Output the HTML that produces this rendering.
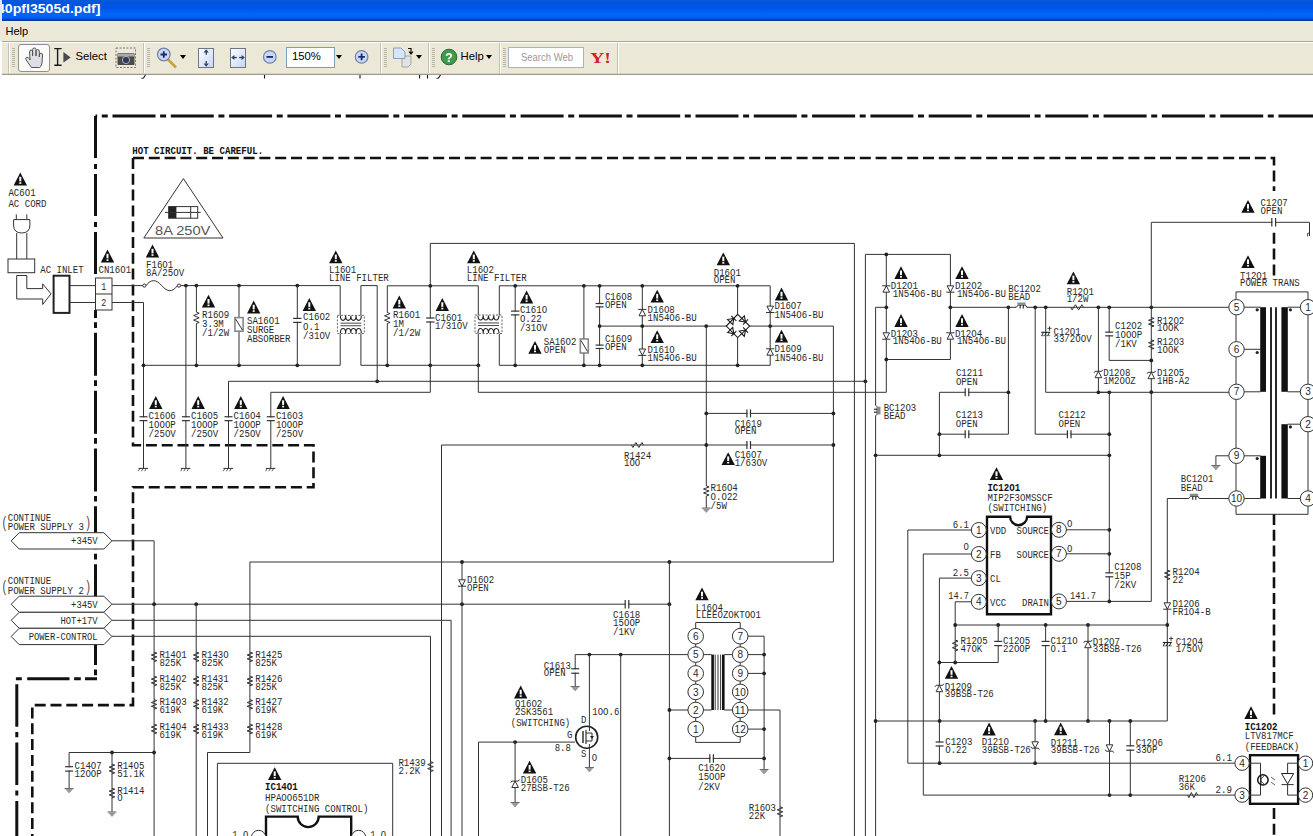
<!DOCTYPE html>
<html><head><meta charset="utf-8">
<style>
html,body{margin:0;padding:0;width:1313px;height:836px;overflow:hidden;background:#fff;font-family:"Liberation Sans",sans-serif;}
#title{position:absolute;left:0;top:0;width:1313px;height:21px;background:linear-gradient(#0a5ad8 0%,#0054e0 15%,#0055e8 38%,#0066f8 65%,#0062f4 82%,#0550d8 90%,#083a9c 97%,#083a9c 100%);}
#title span{position:absolute;left:-4px;top:1px;color:#fff;font-weight:bold;font-size:14px;letter-spacing:0.6px;}
#menu{position:absolute;left:0;top:21px;width:1313px;height:20px;background:linear-gradient(#dff2fc 0 1px,#e6ecdc 1px 2px,#ece9d8 2px);}
#menu span{position:absolute;left:5.5px;top:4px;font-size:11px;color:#000;}
#tb{position:absolute;left:2px;top:41px;width:1311px;height:32px;background:#ebe8d7;border-top:1px solid #aca899;box-shadow:inset 0 1px 0 #fff;}
#tbline{position:absolute;left:2px;top:73px;width:1311px;height:2px;background:linear-gradient(#d6d3c2 0 1px,#9d9b8a 1px 2px);}
.sep{position:absolute;top:43px;width:1px;height:30px;background:#c5c2b2;border-right:1px solid #fff;}
.grip{position:absolute;top:48px;width:3px;height:19px;background:repeating-linear-gradient(#b9b6a4 0 1px,transparent 1px 2px);}
.tbt{position:absolute;font-size:11.3px;color:#000;}
.dd{position:absolute;top:55px;width:0;height:0;border-left:3.5px solid transparent;border-right:3.5px solid transparent;border-top:4px solid #000;}
svg{position:absolute;left:0;top:0;}
</style></head><body>
<div id="title"></div><div style="position:absolute;left:0;top:0;width:2px;height:21px;background:#dfe6f2"></div>
<svg width="200" height="21" style="position:absolute;left:0;top:0"><text x="-3" y="12.9" font-size="13.6" font-weight="bold" font-family="Liberation Sans" fill="#fff" textLength="103.5" lengthAdjust="spacingAndGlyphs">40pfl3505d.pdf]</text><rect x="0" y="0" width="2" height="21" fill="#dfe6f2"/></svg>
<div id="menu"><span>Help</span></div>
<div id="tb"></div>
<div id="tbline"></div>
<div class="sep" style="left:8px"></div>
<div class="grip" style="left:12px"></div>
<div style="position:absolute;left:18px;top:44px;width:30px;height:26px;background:#fbfbf9;border:1px solid #8f8f8f;border-radius:3px;"></div>
<svg width="1313" height="836" viewBox="0 0 1313 836" style="position:absolute;left:0;top:0">
<!-- hand -->
<path d="M31.5,67.5 L26,59.8 Q25,57.8 26.6,57.2 Q28,57 29.6,59 L30,60 L29.6,52 Q29.6,50 31.1,50 Q32.6,50 32.6,52 L32.6,56 L32.6,49.6 Q32.6,48 34.3,48 Q36,48 36,49.6 L36,56 L36,51.2 Q36,49.6 37.6,49.6 Q39.3,49.6 39.3,51.2 L39.3,57 L39.4,54.8 Q39.4,53.2 41,53.2 Q42.5,53.2 42.5,55 L42,63 Q41,67.5 39.5,67.5 Z" fill="#dedee6" stroke="#555" stroke-width="1"/>
<!-- I-beam -->
<path d="M54.3,48.6 H61.6 M57.6,48.6 V65.2 M54.3,65.2 H61.6" stroke="#1a1a1a" stroke-width="1.4" fill="none"/>
<path d="M63.4,52 L70.7,57.5 L63.4,62.5 Z" fill="#4a4a4a"/>
<!-- camera -->
<rect x="116" y="48" width="19.5" height="19.5" fill="none" stroke="#777" stroke-width="1" stroke-dasharray="2 1.5"/>
<rect x="117.5" y="53" width="17" height="12" rx="1" fill="#4a4a4a"/>
<rect x="118" y="53.5" width="16" height="3" fill="#aaa"/>
<circle cx="126" cy="60" r="3.6" fill="#2a3a5a" stroke="#ccc" stroke-width="0.8"/>
<!-- zoom in magnifier -->
<line x1="167.5" y1="59" x2="176" y2="67.5" stroke="#c9a23a" stroke-width="2.6"/>
<circle cx="163.8" cy="54.5" r="6.3" fill="#c8d8f4" stroke="#7480a8" stroke-width="1.2"/>
<path d="M160.5,54.5 H167 M163.8,51.2 V57.8" stroke="#1a2a6a" stroke-width="1.8"/>
<!-- fit page -->
<defs><linearGradient id="gb" x1="0" y1="0" x2="1" y2="1"><stop offset="0" stop-color="#ffffff"/><stop offset="1" stop-color="#c4d4f0"/></linearGradient></defs>
<rect x="198.5" y="48.5" width="15" height="19" fill="url(#gb)" stroke="#6f7686" stroke-width="1"/>
<path d="M206.2,49.2 L203.6,52.6 H208.8 Z M203.6,63.4 H208.8 L206.2,66.8 Z" fill="#2a4268"/>
<rect x="205.6" y="52" width="1.3" height="2.8" fill="#2a4268"/><rect x="205.6" y="61" width="1.3" height="2.6" fill="#2a4268"/>
<!-- fit width -->
<rect x="230.5" y="48.5" width="15" height="19" fill="url(#gb)" stroke="#6f7686" stroke-width="1"/>
<path d="M231.2,57.5 L234.4,54.9 V60.1 Z M244.8,57.5 L241.6,54.9 V60.1 Z" fill="#2a4268"/>
<rect x="234" y="56.9" width="2.8" height="1.3" fill="#2a4268"/><rect x="239.2" y="56.9" width="2.8" height="1.3" fill="#2a4268"/>
<!-- zoom out -->
<circle cx="269.8" cy="56.9" r="6.3" fill="#c8d8f4" stroke="#7480a8" stroke-width="1.2"/>
<path d="M266.5,56.9 H273" stroke="#1a2a6a" stroke-width="1.8"/>
<!-- zoom box -->
<rect x="286.5" y="47.5" width="48" height="20" fill="#fff" stroke="#7f9db9" stroke-width="1"/>
<!-- zoom in 2 -->
<circle cx="361.6" cy="56.9" r="6.3" fill="#c8d8f4" stroke="#7480a8" stroke-width="1.2"/>
<path d="M358.3,56.9 H364.9 M361.6,53.6 V60.2" stroke="#1a2a6a" stroke-width="1.8"/>
<!-- pages icon -->
<path d="M402,56 H411 V64 L408,67 H402 Z" fill="#e2e2e2" stroke="#999" stroke-width="0.8"/>
<path d="M393.5,48 H401 L405,52 V58.5 H393.5 Z" fill="#d8e6fa" stroke="#7a8cb0" stroke-width="0.8"/>
<path d="M408,48.5 H411 V53 M409,51.5 L411,54 L413,51.5" stroke="#111" stroke-width="1.2" fill="none"/>
<!-- help -->
<circle cx="449" cy="57" r="7.8" fill="#3f9a4a" stroke="#2a6a32" stroke-width="1"/>
<text x="449" y="61.5" font-size="12" font-weight="bold" font-family="Liberation Sans" fill="#fff" text-anchor="middle">?</text>
<!-- search -->
<rect x="508.5" y="47.5" width="75" height="20" fill="#fff" stroke="#a6b4c6" stroke-width="1"/>
<text x="521" y="61" font-size="10.5" font-family="Liberation Sans" fill="#9a9a9a" textLength="52" lengthAdjust="spacingAndGlyphs">Search Web</text>
<text x="590" y="63" font-size="15" font-weight="bold" font-family="Liberation Serif" fill="#d0202a" textLength="21" lengthAdjust="spacingAndGlyphs">Y!</text>
</svg>
<div class="tbt" style="left:75.5px;top:50px;">Select</div>
<svg width="1313" height="90" style="position:absolute;left:0;top:0">
<path d="M145.5,75 L143.5,78 L141.5,78.3 M264.5,75 V78.5 M360,75 V78.5 M419.6,75 V78.5 M427.5,75 V78.5 M440.5,75 L438.5,78 L436.5,78.3" stroke="#111" stroke-width="1.1" fill="none"/>
</svg>
<div class="sep" style="left:143px"></div>
<div class="grip" style="left:147px"></div>
<div class="dd" style="left:180px"></div>
<div class="tbt" style="left:292px;top:50px;">150%</div>
<div class="dd" style="left:336px"></div>
<div class="sep" style="left:379.5px"></div>
<div class="grip" style="left:383.5px"></div>
<div class="dd" style="left:416px"></div>
<div class="sep" style="left:427.5px"></div>
<div class="grip" style="left:432px"></div>
<div class="tbt" style="left:460.5px;top:50px;">Help</div>
<div class="dd" style="left:486px"></div>
<div class="sep" style="left:498.5px"></div>
<div class="grip" style="left:503px"></div>
<div class="sep" style="left:617px"></div>
<svg width="1313" height="836" viewBox="0 0 1313 836" style="position:absolute;left:0;top:0" shape-rendering="auto">
<path d="M95.5,116 H1313" stroke="#111" stroke-width="3" fill="none" stroke-dasharray="43 4.6 6 4.7" stroke-dashoffset="41.3"/>
<path d="M95.5,116 V278" stroke="#111" stroke-width="3" fill="none" stroke-dasharray="42 6 5 5"/>
<path d="M95.5,310 V678.8" stroke="#111" stroke-width="3" fill="none" stroke-dasharray="43 4.4 5.7 4.75" stroke-dashoffset="35.05"/>
<path d="M97,678.8 H15.9" stroke="#111" stroke-width="3" fill="none" stroke-dasharray="12 4.2 6.7 4.6 42.3 5.4 5.9 100"/>
<path d="M16.8,684.3 V836" stroke="#111" stroke-width="3" fill="none" stroke-dasharray="42.5 5.3 5.2 5.3"/>
<path d="M133,158 H1274 V191" stroke="#111" stroke-width="2.6" fill="none" stroke-dasharray="11 4.8"/>
<path d="M1274,232.8 V276.3" stroke="#111" stroke-width="2.6" fill="none" stroke-dasharray="11 4.8"/>
<path d="M1274,514 V716" stroke="#111" stroke-width="2.6" fill="none" stroke-dasharray="11 4.8"/>
<path d="M1274,808 V836" stroke="#111" stroke-width="2.6" fill="none" stroke-dasharray="11 4.8"/>
<path d="M133,158 V445.3 H313.5 V487.3 H133 V705.1 H32.3 V836" stroke="#111" stroke-width="2.6" fill="none" stroke-dasharray="11 4.8"/>
<text x="132.3" y="154.3" font-size="11.6" font-family="Liberation Mono" fill="#111" text-anchor="start" font-weight="bold" textLength="130.8" lengthAdjust="spacingAndGlyphs">HOT CIRCUIT. BE CAREFUL.</text>
<path d="M183.4,178.6 L223,238 L143.8,238 Z" stroke="#333" stroke-width="1" fill="none" />
<rect x="168.7" y="206.6" width="29" height="11.6" fill="none" stroke="#333" stroke-width="1"/>
<rect x="168.7" y="206.6" width="7.7" height="11.6" fill="#222"/>
<path d="M190.7,206.6 L190.7,218.2" stroke="#333" stroke-width="1" fill="none" />
<path d="M165,212.4 L200.7,212.4" stroke="#333" stroke-width="1" fill="none" />
<text x="155" y="234.7" font-size="13" font-family="Liberation Sans" fill="#555" text-anchor="start" textLength="55.3" lengthAdjust="spacingAndGlyphs">8A 250V</text>
<path d="M20.3,172.6 L27.0,185.4 L13.600000000000001,185.4 Z" fill="#111"/>
<rect x="19.3" y="176.8" width="2" height="4.6" fill="#fff"/>
<rect x="19.3" y="182.3" width="2" height="1.6" fill="#fff"/>
<text x="8.4" y="196.2" font-size="10" font-family="Liberation Mono" fill="#2a2a2a" text-anchor="start" textLength="27.2" lengthAdjust="spacingAndGlyphs">AC6O1</text>
<text x="8.4" y="207.0" font-size="10" font-family="Liberation Mono" fill="#2a2a2a" text-anchor="start" textLength="38.1" lengthAdjust="spacingAndGlyphs">AC CORD</text>
<path d="M16.3,214.4 L16.3,219.6" stroke="#333" stroke-width="1" fill="none" />
<path d="M26.8,214.4 L26.8,219.6" stroke="#333" stroke-width="1" fill="none" />
<path d="M13.6,219.6 H29.9 V225 Q29.9,233 21.7,233 Q13.6,233 13.6,225 Z" stroke="#333" stroke-width="1" fill="none" />
<path d="M16.7,233 L16.7,259" stroke="#333" stroke-width="1" fill="none" />
<path d="M26.8,233 L26.8,259" stroke="#333" stroke-width="1" fill="none" />
<rect x="8" y="259" width="26.7" height="13.7" fill="none" stroke="#333" stroke-width="1"/>
<path d="M16.7,275.5 V299 H42.7 V304.5 L51,293.8 L42.7,283.9 V288.6 H26.8 V275.5 Z" stroke="#333" stroke-width="1" fill="none" />
<text x="40.2" y="272.7" font-size="10" font-family="Liberation Mono" fill="#2a2a2a" text-anchor="start" textLength="43.5" lengthAdjust="spacingAndGlyphs">AC INLET</text>
<rect x="53.6" y="275.7" width="15.9" height="37.2" fill="none" stroke="#222" stroke-width="2"/>
<path d="M69.5,285.6 L95.5,285.6" stroke="#333" stroke-width="1" fill="none" />
<path d="M69.5,302.5 L95.5,302.5" stroke="#333" stroke-width="1" fill="none" />
<rect x="95.5" y="278" width="16.5" height="32" fill="#fff" stroke="#333" stroke-width="1"/>
<path d="M95.5,294 L112,294" stroke="#333" stroke-width="1" fill="none" />
<text x="103.7" y="289.5" font-size="10" font-family="Liberation Mono" fill="#2a2a2a" text-anchor="middle" textLength="5.0" lengthAdjust="spacingAndGlyphs">1</text>
<text x="103.7" y="306" font-size="10" font-family="Liberation Mono" fill="#2a2a2a" text-anchor="middle" textLength="5.0" lengthAdjust="spacingAndGlyphs">2</text>
<path d="M107.5,249.6 L114.2,262.4 L100.8,262.4 Z" fill="#111"/>
<rect x="106.5" y="253.8" width="2" height="4.6" fill="#fff"/>
<rect x="106.5" y="259.3" width="2" height="1.6" fill="#fff"/>
<text x="98.5" y="273" font-size="10" font-family="Liberation Mono" fill="#2a2a2a" text-anchor="start" textLength="32.6" lengthAdjust="spacingAndGlyphs">CN16O1</text>
<path d="M152.5,244.6 L159.2,257.4 L145.8,257.4 Z" fill="#111"/>
<rect x="151.5" y="248.8" width="2" height="4.6" fill="#fff"/>
<rect x="151.5" y="254.3" width="2" height="1.6" fill="#fff"/>
<text x="146.0" y="267.6" font-size="10" font-family="Liberation Mono" fill="#2a2a2a" text-anchor="start" textLength="27.2" lengthAdjust="spacingAndGlyphs">F16O1</text>
<text x="146.0" y="275.5" font-size="10" font-family="Liberation Mono" fill="#2a2a2a" text-anchor="start" textLength="38.1" lengthAdjust="spacingAndGlyphs">8A/25OV</text>
<path d="M112,285.6 L142.9,285.6" stroke="#333" stroke-width="1" fill="none" />
<circle cx="144.4" cy="285.6" r="1.6" fill="#fff" stroke="#333" stroke-width="1"/>
<circle cx="179" cy="285.6" r="1.6" fill="#fff" stroke="#333" stroke-width="1"/>
<path d="M146,285.6 C151,279 156,279 161.7,285.6 S172.5,292.5 177.4,285.6" stroke="#333" stroke-width="1" fill="none" />
<path d="M180.6,285.6 L340.2,285.6" stroke="#333" stroke-width="1" fill="none" />
<path d="M112,302.5 L143.5,302.5 L143.5,468.4" stroke="#333" stroke-width="1" fill="none" />
<path d="M143.5,365.3 L340.2,365.3" stroke="#333" stroke-width="1" fill="none" />
<circle cx="143.5" cy="365.3" r="1.9" fill="#222"/>
<circle cx="185.9" cy="285.6" r="1.9" fill="#222"/>
<circle cx="196.4" cy="285.6" r="1.9" fill="#222"/>
<circle cx="196.4" cy="365.3" r="1.9" fill="#222"/>
<circle cx="239" cy="285.6" r="1.9" fill="#222"/>
<circle cx="239" cy="365.3" r="1.9" fill="#222"/>
<circle cx="297.3" cy="285.6" r="1.9" fill="#222"/>
<circle cx="297.3" cy="365.3" r="1.9" fill="#222"/>
<path d="M185.9,285.6 L185.9,468.4" stroke="#333" stroke-width="1" fill="none" />
<path d="M196.4,285.6 L196.4,312.1" stroke="#333" stroke-width="1" fill="none" />
<path d="M196.4,312.1 L199.20000000000002,313.24 L193.6,315.52000000000004 L199.20000000000002,317.8 L193.6,320.08000000000004 L199.20000000000002,322.36 L196.4,323.5" stroke="#333" stroke-width="1" fill="none" />
<path d="M196.4,323.5 L196.4,365.3" stroke="#333" stroke-width="1" fill="none" />
<path d="M208.5,294.8 L215.2,307.59999999999997 L201.8,307.59999999999997 Z" fill="#111"/>
<rect x="207.5" y="299.0" width="2" height="4.6" fill="#fff"/>
<rect x="207.5" y="304.5" width="2" height="1.6" fill="#fff"/>
<text x="202.0" y="317.8" font-size="10" font-family="Liberation Mono" fill="#2a2a2a" text-anchor="start" textLength="27.2" lengthAdjust="spacingAndGlyphs">R16O9</text>
<text x="202.0" y="327.1" font-size="10" font-family="Liberation Mono" fill="#2a2a2a" text-anchor="start" textLength="21.8" lengthAdjust="spacingAndGlyphs">3.3M</text>
<text x="202.0" y="336.40000000000003" font-size="10" font-family="Liberation Mono" fill="#2a2a2a" text-anchor="start" textLength="27.2" lengthAdjust="spacingAndGlyphs">/1/2W</text>
<path d="M239,285.6 L239,365.3" stroke="#333" stroke-width="1" fill="none" />
<rect x="234.9" y="317.6" width="8.2" height="13.6" fill="#fff" stroke="#888" stroke-width="1.6"/>
<path d="M235.5,319 L242.5,330" stroke="#333" stroke-width="1" fill="none" />
<path d="M253.7,300.6 L260.4,313.4 L247.0,313.4 Z" fill="#111"/>
<rect x="252.7" y="304.8" width="2" height="4.6" fill="#fff"/>
<rect x="252.7" y="310.3" width="2" height="1.6" fill="#fff"/>
<text x="247.0" y="323.8" font-size="10" font-family="Liberation Mono" fill="#2a2a2a" text-anchor="start" textLength="32.6" lengthAdjust="spacingAndGlyphs">SA16O1</text>
<text x="247.0" y="333.0" font-size="10" font-family="Liberation Mono" fill="#2a2a2a" text-anchor="start" textLength="27.2" lengthAdjust="spacingAndGlyphs">SURGE</text>
<text x="247.0" y="342.2" font-size="10" font-family="Liberation Mono" fill="#2a2a2a" text-anchor="start" textLength="43.5" lengthAdjust="spacingAndGlyphs">ABSORBER</text>
<path d="M297.3,285.6 L297.3,365.3" stroke="#333" stroke-width="1" fill="none" />
<rect x="296.3" y="319.0" width="2" height="2.8" fill="#fff"/>
<path d="M293.1,318.4 L301.5,318.4" stroke="#333" stroke-width="1.2" fill="none" />
<path d="M293.1,322.4 L301.5,322.4" stroke="#333" stroke-width="1.2" fill="none" />
<path d="M309.3,298.1 L316.0,310.9 L302.6,310.9 Z" fill="#111"/>
<rect x="308.3" y="302.3" width="2" height="4.6" fill="#fff"/>
<rect x="308.3" y="307.8" width="2" height="1.6" fill="#fff"/>
<text x="303.1" y="320.4" font-size="10" font-family="Liberation Mono" fill="#2a2a2a" text-anchor="start" textLength="27.2" lengthAdjust="spacingAndGlyphs">C16O2</text>
<text x="303.1" y="329.79999999999995" font-size="10" font-family="Liberation Mono" fill="#2a2a2a" text-anchor="start" textLength="16.3" lengthAdjust="spacingAndGlyphs">O.1</text>
<text x="303.1" y="339.2" font-size="10" font-family="Liberation Mono" fill="#2a2a2a" text-anchor="start" textLength="27.2" lengthAdjust="spacingAndGlyphs">/31OV</text>
<path d="M340.2,285.6 L340.2,365.3" stroke="#333" stroke-width="1" fill="none" />
<path d="M360.9,285.6 L360.9,365.3" stroke="#333" stroke-width="1" fill="none" />
<path d="M360.9,285.6 L377.2,285.6" stroke="#333" stroke-width="1" fill="none" />
<path d="M377.2,285.6 L377.2,381.3" stroke="#333" stroke-width="1" fill="none" />
<circle cx="377.2" cy="381.3" r="1.9" fill="#222"/>
<path d="M360.9,365.3 L430.3,365.3" stroke="#333" stroke-width="1" fill="none" />
<path d="M335.8,250.4 L342.5,263.2 L329.1,263.2 Z" fill="#111"/>
<rect x="334.8" y="254.60000000000002" width="2" height="4.6" fill="#fff"/>
<rect x="334.8" y="260.1" width="2" height="1.6" fill="#fff"/>
<text x="329.0" y="272.7" font-size="10" font-family="Liberation Mono" fill="#2a2a2a" text-anchor="start" textLength="27.2" lengthAdjust="spacingAndGlyphs">L16O1</text>
<text x="329.0" y="280.7" font-size="10" font-family="Liberation Mono" fill="#2a2a2a" text-anchor="start" textLength="59.8" lengthAdjust="spacingAndGlyphs">LINE FILTER</text>
<rect x="337.4" y="315.4" width="26.900000000000034" height="18.100000000000023" fill="#fff" stroke="#555" stroke-width="0.9" stroke-dasharray="2 1.5"/>
<path d="M340.4,315.79999999999995 a2.6125000000000043,4.6 0 0 0 5.2250000000000085,0 a2.6125000000000043,4.6 0 0 0 5.2250000000000085,0 a2.6125000000000043,4.6 0 0 0 5.2250000000000085,0 a2.6125000000000043,4.6 0 0 0 5.2250000000000085,0" stroke="#222" stroke-width="1.1" fill="none" />
<path d="M340.4,333.1 a2.6125000000000043,4.6 0 0 1 5.2250000000000085,0 a2.6125000000000043,4.6 0 0 1 5.2250000000000085,0 a2.6125000000000043,4.6 0 0 1 5.2250000000000085,0 a2.6125000000000043,4.6 0 0 1 5.2250000000000085,0" stroke="#222" stroke-width="1.1" fill="none" />
<path d="M340.4,323.15 L361.3,323.15" stroke="#333" stroke-width="0.9" fill="none" />
<path d="M340.4,325.75 L361.3,325.75" stroke="#333" stroke-width="0.9" fill="none" />
<path d="M430.3,243.4 L854.4,243.4 L854.4,836" stroke="#333" stroke-width="1" fill="none" />
<path d="M430.3,243.4 L430.3,392.3 L270.8,392.3 L270.8,468.4" stroke="#333" stroke-width="1" fill="none" />
<path d="M228.5,468.4 L228.5,381.3 L865.4,381.3" stroke="#333" stroke-width="1" fill="none" />
<circle cx="865.4" cy="381.3" r="1.9" fill="#222"/>
<path d="M387.3,285.8 L478.3,285.8" stroke="#333" stroke-width="1" fill="none" />
<path d="M478.3,285.8 L478.3,392.3 L886.3,392.3 L886.3,254.4" stroke="#333" stroke-width="1" fill="none" />
<circle cx="430.3" cy="285.8" r="1.9" fill="#222"/>
<circle cx="430.3" cy="365.3" r="1.9" fill="#222"/>
<circle cx="478.3" cy="365.3" r="1.9" fill="#222"/>
<circle cx="387.3" cy="365.3" r="1.9" fill="#222"/>
<path d="M387.3,285.8 L387.3,312.5" stroke="#333" stroke-width="1" fill="none" />
<path d="M387.3,312.5 L390.1,313.6 L384.5,315.8 L390.1,318.0 L384.5,320.2 L390.1,322.4 L387.3,323.5" stroke="#333" stroke-width="1" fill="none" />
<path d="M387.3,323.5 L387.3,365.3" stroke="#333" stroke-width="1" fill="none" />
<path d="M399.3,295.6 L406.0,308.4 L392.6,308.4 Z" fill="#111"/>
<rect x="398.3" y="299.8" width="2" height="4.6" fill="#fff"/>
<rect x="398.3" y="305.3" width="2" height="1.6" fill="#fff"/>
<text x="393.0" y="318.0" font-size="10" font-family="Liberation Mono" fill="#2a2a2a" text-anchor="start" textLength="27.2" lengthAdjust="spacingAndGlyphs">R16O1</text>
<text x="393.0" y="326.8" font-size="10" font-family="Liberation Mono" fill="#2a2a2a" text-anchor="start" textLength="10.9" lengthAdjust="spacingAndGlyphs">1M</text>
<text x="393.0" y="335.6" font-size="10" font-family="Liberation Mono" fill="#2a2a2a" text-anchor="start" textLength="27.2" lengthAdjust="spacingAndGlyphs">/1/2W</text>
<rect x="429.3" y="318.6" width="2" height="2.8" fill="#fff"/>
<path d="M426.1,318.0 L434.5,318.0" stroke="#333" stroke-width="1.2" fill="none" />
<path d="M426.1,322.0 L434.5,322.0" stroke="#333" stroke-width="1.2" fill="none" />
<path d="M442.3,298.1 L449.0,310.9 L435.6,310.9 Z" fill="#111"/>
<rect x="441.3" y="302.3" width="2" height="4.6" fill="#fff"/>
<rect x="441.3" y="307.8" width="2" height="1.6" fill="#fff"/>
<text x="435.0" y="320.5" font-size="10" font-family="Liberation Mono" fill="#2a2a2a" text-anchor="start" textLength="27.2" lengthAdjust="spacingAndGlyphs">C16O1</text>
<text x="435.0" y="328.8" font-size="10" font-family="Liberation Mono" fill="#2a2a2a" text-anchor="start" textLength="32.6" lengthAdjust="spacingAndGlyphs">1/31OV</text>
<path d="M430.3,365.3 L478.3,365.3" stroke="#333" stroke-width="1" fill="none" />
<path d="M499.3,285.8 L770.2,285.8" stroke="#333" stroke-width="1" fill="none" />
<path d="M499.3,285.8 L499.3,365.3 L770.2,365.3" stroke="#333" stroke-width="1" fill="none" />
<rect x="475" y="315" width="27" height="18.5" fill="#fff" stroke="#555" stroke-width="0.9" stroke-dasharray="2 1.5"/>
<path d="M478,315.4 a2.625,4.6 0 0 0 5.25,0 a2.625,4.6 0 0 0 5.25,0 a2.625,4.6 0 0 0 5.25,0 a2.625,4.6 0 0 0 5.25,0" stroke="#222" stroke-width="1.1" fill="none" />
<path d="M478,333.1 a2.625,4.6 0 0 1 5.25,0 a2.625,4.6 0 0 1 5.25,0 a2.625,4.6 0 0 1 5.25,0 a2.625,4.6 0 0 1 5.25,0" stroke="#222" stroke-width="1.1" fill="none" />
<path d="M478,322.95 L499,322.95" stroke="#333" stroke-width="0.9" fill="none" />
<path d="M478,325.55 L499,325.55" stroke="#333" stroke-width="0.9" fill="none" />
<path d="M473.8,250.4 L480.5,263.2 L467.1,263.2 Z" fill="#111"/>
<rect x="472.8" y="254.60000000000002" width="2" height="4.6" fill="#fff"/>
<rect x="472.8" y="260.1" width="2" height="1.6" fill="#fff"/>
<text x="466.8" y="272.7" font-size="10" font-family="Liberation Mono" fill="#2a2a2a" text-anchor="start" textLength="27.2" lengthAdjust="spacingAndGlyphs">L16O2</text>
<text x="466.8" y="280.7" font-size="10" font-family="Liberation Mono" fill="#2a2a2a" text-anchor="start" textLength="59.8" lengthAdjust="spacingAndGlyphs">LINE FILTER</text>
<path d="M515.2,285.8 L515.2,365.3" stroke="#333" stroke-width="1" fill="none" />
<rect x="514.2" y="311.70000000000005" width="2" height="2.5999999999999996" fill="#fff"/>
<path d="M511.00000000000006,311.1 L519.4000000000001,311.1" stroke="#333" stroke-width="1.2" fill="none" />
<path d="M511.00000000000006,314.9 L519.4000000000001,314.9" stroke="#333" stroke-width="1.2" fill="none" />
<circle cx="515.2" cy="285.8" r="1.9" fill="#222"/>
<circle cx="515.2" cy="365.3" r="1.9" fill="#222"/>
<path d="M526.6,290.6 L533.3000000000001,303.4 L519.9,303.4 Z" fill="#111"/>
<rect x="525.6" y="294.8" width="2" height="4.6" fill="#fff"/>
<rect x="525.6" y="300.3" width="2" height="1.6" fill="#fff"/>
<text x="519.9" y="313.2" font-size="10" font-family="Liberation Mono" fill="#2a2a2a" text-anchor="start" textLength="27.2" lengthAdjust="spacingAndGlyphs">C161O</text>
<text x="519.9" y="322.09999999999997" font-size="10" font-family="Liberation Mono" fill="#2a2a2a" text-anchor="start" textLength="21.8" lengthAdjust="spacingAndGlyphs">O.22</text>
<text x="519.9" y="331.0" font-size="10" font-family="Liberation Mono" fill="#2a2a2a" text-anchor="start" textLength="27.2" lengthAdjust="spacingAndGlyphs">/31OV</text>
<path d="M583.9,285.8 L583.9,365.3" stroke="#333" stroke-width="1" fill="none" />
<circle cx="583.9" cy="285.8" r="1.9" fill="#222"/>
<circle cx="583.9" cy="365.3" r="1.9" fill="#222"/>
<rect x="580.3" y="339" width="8" height="14" fill="#fff" stroke="#888" stroke-width="1.6"/>
<path d="M581,340.5 L587.5,351.5" stroke="#333" stroke-width="1" fill="none" />
<path d="M535,340.90000000000003 L541.7,353.7 L528.3,353.7 Z" fill="#111"/>
<rect x="534" y="345.1" width="2" height="4.6" fill="#fff"/>
<rect x="534" y="350.6" width="2" height="1.6" fill="#fff"/>
<text x="543.8" y="344.7" font-size="10" font-family="Liberation Mono" fill="#2a2a2a" text-anchor="start" textLength="32.6" lengthAdjust="spacingAndGlyphs">SA16O2</text>
<text x="543.8" y="352.8" font-size="10" font-family="Liberation Mono" fill="#2a2a2a" text-anchor="start" textLength="21.8" lengthAdjust="spacingAndGlyphs">OPEN</text>
<path d="M599.6,285.8 L599.6,365.3" stroke="#333" stroke-width="1" fill="none" />
<circle cx="599.6" cy="285.8" r="1.9" fill="#222"/>
<circle cx="599.6" cy="326.1" r="1.9" fill="#222"/>
<circle cx="599.6" cy="365.3" r="1.9" fill="#222"/>
<rect x="598.6" y="304.1" width="2" height="2.2" fill="#fff"/>
<path d="M595.6,303.5 L603.6,303.5" stroke="#333" stroke-width="1.2" fill="none" />
<path d="M595.6,306.9 L603.6,306.9" stroke="#333" stroke-width="1.2" fill="none" />
<rect x="598.6" y="345.70000000000005" width="2" height="2.2" fill="#fff"/>
<path d="M595.6,345.1 L603.6,345.1" stroke="#333" stroke-width="1.2" fill="none" />
<path d="M595.6,348.5 L603.6,348.5" stroke="#333" stroke-width="1.2" fill="none" />
<text x="604.9" y="300.0" font-size="10" font-family="Liberation Mono" fill="#2a2a2a" text-anchor="start" textLength="27.2" lengthAdjust="spacingAndGlyphs">C16O8</text>
<text x="604.9" y="307.8" font-size="10" font-family="Liberation Mono" fill="#2a2a2a" text-anchor="start" textLength="21.8" lengthAdjust="spacingAndGlyphs">OPEN</text>
<text x="604.9" y="342.0" font-size="10" font-family="Liberation Mono" fill="#2a2a2a" text-anchor="start" textLength="27.2" lengthAdjust="spacingAndGlyphs">C16O9</text>
<text x="604.9" y="349.6" font-size="10" font-family="Liberation Mono" fill="#2a2a2a" text-anchor="start" textLength="21.8" lengthAdjust="spacingAndGlyphs">OPEN</text>
<path d="M599.6,326.1 L726.5,326.1" stroke="#333" stroke-width="1" fill="none" />
<circle cx="706.2" cy="326.1" r="1.9" fill="#222"/>
<path d="M642.3,285.8 L642.3,365.3" stroke="#333" stroke-width="1" fill="none" />
<circle cx="642.3" cy="285.8" r="1.9" fill="#222"/>
<circle cx="642.3" cy="326.1" r="1.9" fill="#222"/>
<circle cx="642.3" cy="365.3" r="1.9" fill="#222"/>
<rect x="641.3" y="309.40000000000003" width="2" height="6.4" fill="#fff"/>
<path d="M642.3,309.40000000000003 L645.5999999999999,315.8 L639.0,315.8 Z" stroke="#333" stroke-width="1" fill="none" />
<path d="M638.2,309.40000000000003 L646.3999999999999,309.40000000000003" stroke="#333" stroke-width="1" fill="none" />
<rect x="641.3" y="349.0" width="2" height="6.4" fill="#fff"/>
<path d="M642.3,355.4 L645.5999999999999,349.0 L639.0,349.0 Z" stroke="#333" stroke-width="1" fill="none" />
<path d="M638.2,355.4 L646.3999999999999,355.4" stroke="#333" stroke-width="1" fill="none" />
<path d="M657.2,289.70000000000005 L663.9000000000001,302.5 L650.5,302.5 Z" fill="#111"/>
<rect x="656.2" y="293.90000000000003" width="2" height="4.6" fill="#fff"/>
<rect x="656.2" y="299.40000000000003" width="2" height="1.6" fill="#fff"/>
<text x="647.6" y="313.0" font-size="10" font-family="Liberation Mono" fill="#2a2a2a" text-anchor="start" textLength="27.2" lengthAdjust="spacingAndGlyphs">D16O8</text>
<text x="647.6" y="320.6" font-size="10" font-family="Liberation Mono" fill="#2a2a2a" text-anchor="start" textLength="49.0" lengthAdjust="spacingAndGlyphs">1N54O6-BU</text>
<path d="M657.2,330.20000000000005 L663.9000000000001,343.0 L650.5,343.0 Z" fill="#111"/>
<rect x="656.2" y="334.40000000000003" width="2" height="4.6" fill="#fff"/>
<rect x="656.2" y="339.90000000000003" width="2" height="1.6" fill="#fff"/>
<text x="647.6" y="352.6" font-size="10" font-family="Liberation Mono" fill="#2a2a2a" text-anchor="start" textLength="27.2" lengthAdjust="spacingAndGlyphs">D161O</text>
<text x="647.6" y="360.5" font-size="10" font-family="Liberation Mono" fill="#2a2a2a" text-anchor="start" textLength="49.0" lengthAdjust="spacingAndGlyphs">1N54O6-BU</text>
<path d="M737.6,285.8 L737.6,314.3" stroke="#333" stroke-width="1" fill="none" />
<path d="M737.6,337.8 L737.6,365.3" stroke="#333" stroke-width="1" fill="none" />
<circle cx="737.6" cy="285.8" r="1.9" fill="#222"/>
<circle cx="737.6" cy="365.3" r="1.9" fill="#222"/>
<path d="M737.7,314.3 L749.7,326.1 L737.7,337.6 L726.3,326.1 Z" stroke="#1a1a1a" stroke-width="1.1" fill="none" />
<path d="M732.7825777498888,324.5712208895661 L733.8065112544164,318.33010238577964 L727.6043997412785,319.5685743388748 Z" stroke="#1a1a1a" stroke-width="1.1" fill="none" />
<path d="M736.3956002587215,320.8314256611253 L731.2174222501112,315.82877911043397" stroke="#1a1a1a" stroke-width="1.1" fill="none" />
<path d="M739.3220346059632,320.9439213726024 L745.5538615675075,322.0229638747158 L744.370242259022,315.8101508779662 Z" stroke="#1a1a1a" stroke-width="1.1" fill="none" />
<path d="M743.0297577409781,324.5898491220339 L748.0779653940369,319.4560786273977" stroke="#1a1a1a" stroke-width="1.1" fill="none" />
<path d="M727.612891982895,332.5379558461508 L733.8304318922718,333.69648831237953 L732.7262442325614,327.46906752909024 Z" stroke="#1a1a1a" stroke-width="1.1" fill="none" />
<path d="M731.2737557674386,336.2309324709098 L736.387108017105,331.16204415384925" stroke="#1a1a1a" stroke-width="1.1" fill="none" />
<path d="M744.3136899743481,336.2481114828281 L745.5771693333002,330.05104605558745 L739.3319713590517,331.0497964059971 Z" stroke="#1a1a1a" stroke-width="1.1" fill="none" />
<path d="M748.0680286409483,332.65020359400296 L743.086310025652,327.45188851717194" stroke="#1a1a1a" stroke-width="1.1" fill="none" />
<path d="M723.3,252.4 L730.0,265.2 L716.5999999999999,265.2 Z" fill="#111"/>
<rect x="722.3" y="256.6" width="2" height="4.6" fill="#fff"/>
<rect x="722.3" y="262.1" width="2" height="1.6" fill="#fff"/>
<text x="713.7" y="275.9" font-size="10" font-family="Liberation Mono" fill="#2a2a2a" text-anchor="start" textLength="27.2" lengthAdjust="spacingAndGlyphs">D16O1</text>
<text x="713.7" y="283.29999999999995" font-size="10" font-family="Liberation Mono" fill="#2a2a2a" text-anchor="start" textLength="21.8" lengthAdjust="spacingAndGlyphs">OPEN</text>
<path d="M748.9,326.1 L833.4,326.1 L833.4,562 L249.9,562 L249.9,752.5 L207.5,752.5 L207.5,836" stroke="#333" stroke-width="1" fill="none" />
<circle cx="770.2" cy="326.1" r="1.9" fill="#222"/>
<path d="M770.2,285.8 L770.2,365.3" stroke="#333" stroke-width="1" fill="none" />
<rect x="769.2" y="306.1" width="2" height="6.4" fill="#fff"/>
<path d="M770.2,312.5 L773.5,306.1 L766.9000000000001,306.1 Z" stroke="#333" stroke-width="1" fill="none" />
<path d="M766.1000000000001,312.5 L774.3,312.5" stroke="#333" stroke-width="1" fill="none" />
<rect x="769.2" y="348.8" width="2" height="6.4" fill="#fff"/>
<path d="M770.2,348.8 L773.5,355.2 L766.9000000000001,355.2 Z" stroke="#333" stroke-width="1" fill="none" />
<path d="M766.1000000000001,348.8 L774.3,348.8" stroke="#333" stroke-width="1" fill="none" />
<path d="M781.5,287.6 L788.2,300.4 L774.8,300.4 Z" fill="#111"/>
<rect x="780.5" y="291.8" width="2" height="4.6" fill="#fff"/>
<rect x="780.5" y="297.3" width="2" height="1.6" fill="#fff"/>
<text x="774.5" y="309.3" font-size="10" font-family="Liberation Mono" fill="#2a2a2a" text-anchor="start" textLength="27.2" lengthAdjust="spacingAndGlyphs">D16O7</text>
<text x="774.5" y="317.90000000000003" font-size="10" font-family="Liberation Mono" fill="#2a2a2a" text-anchor="start" textLength="49.0" lengthAdjust="spacingAndGlyphs">1N54O6-BU</text>
<path d="M781.5,329.8 L788.2,342.59999999999997 L774.8,342.59999999999997 Z" fill="#111"/>
<rect x="780.5" y="334.0" width="2" height="4.6" fill="#fff"/>
<rect x="780.5" y="339.5" width="2" height="1.6" fill="#fff"/>
<text x="774.5" y="352.0" font-size="10" font-family="Liberation Mono" fill="#2a2a2a" text-anchor="start" textLength="27.2" lengthAdjust="spacingAndGlyphs">D16O9</text>
<text x="774.5" y="360.5" font-size="10" font-family="Liberation Mono" fill="#2a2a2a" text-anchor="start" textLength="49.0" lengthAdjust="spacingAndGlyphs">1N54O6-BU</text>
<rect x="142.5" y="417.35" width="2" height="2.7" fill="#fff"/>
<path d="M139.5,416.75 L147.5,416.75" stroke="#333" stroke-width="1.2" fill="none" />
<path d="M139.5,420.65 L147.5,420.65" stroke="#333" stroke-width="1.2" fill="none" />
<path d="M138.5,468.4 L148.0,468.4" stroke="#333" stroke-width="1" fill="none" />
<path d="M140.0,468.4 L138.2,471.2" stroke="#333" stroke-width="0.8" fill="none" />
<path d="M143.2,468.4 L141.39999999999998,471.2" stroke="#333" stroke-width="0.8" fill="none" />
<path d="M146.4,468.4 L144.6,471.2" stroke="#333" stroke-width="0.8" fill="none" />
<path d="M155.8,396.1 L162.5,408.9 L149.10000000000002,408.9 Z" fill="#111"/>
<rect x="154.8" y="400.3" width="2" height="4.6" fill="#fff"/>
<rect x="154.8" y="405.8" width="2" height="1.6" fill="#fff"/>
<text x="148.6" y="418.7" font-size="10" font-family="Liberation Mono" fill="#2a2a2a" text-anchor="start" textLength="27.2" lengthAdjust="spacingAndGlyphs">C16O6</text>
<text x="148.6" y="428.0" font-size="10" font-family="Liberation Mono" fill="#2a2a2a" text-anchor="start" textLength="27.2" lengthAdjust="spacingAndGlyphs">1OOOP</text>
<text x="148.6" y="437.3" font-size="10" font-family="Liberation Mono" fill="#2a2a2a" text-anchor="start" textLength="27.2" lengthAdjust="spacingAndGlyphs">/25OV</text>
<rect x="184.9" y="417.35" width="2" height="2.7" fill="#fff"/>
<path d="M181.9,416.75 L189.9,416.75" stroke="#333" stroke-width="1.2" fill="none" />
<path d="M181.9,420.65 L189.9,420.65" stroke="#333" stroke-width="1.2" fill="none" />
<path d="M180.9,468.4 L190.4,468.4" stroke="#333" stroke-width="1" fill="none" />
<path d="M182.4,468.4 L180.6,471.2" stroke="#333" stroke-width="0.8" fill="none" />
<path d="M185.6,468.4 L183.79999999999998,471.2" stroke="#333" stroke-width="0.8" fill="none" />
<path d="M188.8,468.4 L187.0,471.2" stroke="#333" stroke-width="0.8" fill="none" />
<path d="M198.20000000000002,396.1 L204.9,408.9 L191.50000000000003,408.9 Z" fill="#111"/>
<rect x="197.20000000000002" y="400.3" width="2" height="4.6" fill="#fff"/>
<rect x="197.20000000000002" y="405.8" width="2" height="1.6" fill="#fff"/>
<text x="191.0" y="418.7" font-size="10" font-family="Liberation Mono" fill="#2a2a2a" text-anchor="start" textLength="27.2" lengthAdjust="spacingAndGlyphs">C16O5</text>
<text x="191.0" y="428.0" font-size="10" font-family="Liberation Mono" fill="#2a2a2a" text-anchor="start" textLength="27.2" lengthAdjust="spacingAndGlyphs">1OOOP</text>
<text x="191.0" y="437.3" font-size="10" font-family="Liberation Mono" fill="#2a2a2a" text-anchor="start" textLength="27.2" lengthAdjust="spacingAndGlyphs">/25OV</text>
<rect x="227.5" y="417.35" width="2" height="2.7" fill="#fff"/>
<path d="M224.5,416.75 L232.5,416.75" stroke="#333" stroke-width="1.2" fill="none" />
<path d="M224.5,420.65 L232.5,420.65" stroke="#333" stroke-width="1.2" fill="none" />
<path d="M223.5,468.4 L233.0,468.4" stroke="#333" stroke-width="1" fill="none" />
<path d="M225.0,468.4 L223.2,471.2" stroke="#333" stroke-width="0.8" fill="none" />
<path d="M228.2,468.4 L226.39999999999998,471.2" stroke="#333" stroke-width="0.8" fill="none" />
<path d="M231.4,468.4 L229.6,471.2" stroke="#333" stroke-width="0.8" fill="none" />
<path d="M240.8,396.1 L247.5,408.9 L234.10000000000002,408.9 Z" fill="#111"/>
<rect x="239.8" y="400.3" width="2" height="4.6" fill="#fff"/>
<rect x="239.8" y="405.8" width="2" height="1.6" fill="#fff"/>
<text x="233.6" y="418.7" font-size="10" font-family="Liberation Mono" fill="#2a2a2a" text-anchor="start" textLength="27.2" lengthAdjust="spacingAndGlyphs">C16O4</text>
<text x="233.6" y="428.0" font-size="10" font-family="Liberation Mono" fill="#2a2a2a" text-anchor="start" textLength="27.2" lengthAdjust="spacingAndGlyphs">1OOOP</text>
<text x="233.6" y="437.3" font-size="10" font-family="Liberation Mono" fill="#2a2a2a" text-anchor="start" textLength="27.2" lengthAdjust="spacingAndGlyphs">/25OV</text>
<rect x="269.8" y="417.35" width="2" height="2.7" fill="#fff"/>
<path d="M266.8,416.75 L274.8,416.75" stroke="#333" stroke-width="1.2" fill="none" />
<path d="M266.8,420.65 L274.8,420.65" stroke="#333" stroke-width="1.2" fill="none" />
<path d="M265.8,468.4 L275.3,468.4" stroke="#333" stroke-width="1" fill="none" />
<path d="M267.3,468.4 L265.5,471.2" stroke="#333" stroke-width="0.8" fill="none" />
<path d="M270.5,468.4 L268.7,471.2" stroke="#333" stroke-width="0.8" fill="none" />
<path d="M273.7,468.4 L271.9,471.2" stroke="#333" stroke-width="0.8" fill="none" />
<path d="M283.1,396.1 L289.8,408.9 L276.40000000000003,408.9 Z" fill="#111"/>
<rect x="282.1" y="400.3" width="2" height="4.6" fill="#fff"/>
<rect x="282.1" y="405.8" width="2" height="1.6" fill="#fff"/>
<text x="275.90000000000003" y="418.7" font-size="10" font-family="Liberation Mono" fill="#2a2a2a" text-anchor="start" textLength="27.2" lengthAdjust="spacingAndGlyphs">C16O3</text>
<text x="275.90000000000003" y="428.0" font-size="10" font-family="Liberation Mono" fill="#2a2a2a" text-anchor="start" textLength="27.2" lengthAdjust="spacingAndGlyphs">1OOOP</text>
<text x="275.90000000000003" y="437.3" font-size="10" font-family="Liberation Mono" fill="#2a2a2a" text-anchor="start" textLength="27.2" lengthAdjust="spacingAndGlyphs">/25OV</text>
<path d="M706.3,326.1 L706.3,486" stroke="#333" stroke-width="1" fill="none" />
<path d="M706.3,486.0 L709.0999999999999,487.0 L703.5,489.0 L709.0999999999999,491.0 L703.5,493.0 L709.0999999999999,495.0 L706.3,496.0" stroke="#333" stroke-width="1" fill="none" />
<path d="M706.3,496 L706.3,508" stroke="#333" stroke-width="1" fill="none" />
<path d="M701.8,508 L710.8,508" stroke="#666" stroke-width="1" fill="none" />
<path d="M703.0,508.8 L709.5999999999999,508.8 L706.3,512.5 Z" fill="#9a9a9a" stroke="#888" stroke-width="0.6"/>
<text x="710.6" y="490.8" font-size="10" font-family="Liberation Mono" fill="#2a2a2a" text-anchor="start" textLength="27.2" lengthAdjust="spacingAndGlyphs">R16O4</text>
<text x="710.6" y="499.7" font-size="10" font-family="Liberation Mono" fill="#2a2a2a" text-anchor="start" textLength="27.2" lengthAdjust="spacingAndGlyphs">O.O22</text>
<text x="710.6" y="508.6" font-size="10" font-family="Liberation Mono" fill="#2a2a2a" text-anchor="start" textLength="16.3" lengthAdjust="spacingAndGlyphs">/5W</text>
<path d="M706.3,413.4 L833.4,413.4" stroke="#333" stroke-width="1" fill="none" />
<circle cx="706.3" cy="413.4" r="1.9" fill="#222"/>
<circle cx="833.4" cy="413.4" r="1.9" fill="#222"/>
<rect x="747.5000000000001" y="412.4" width="2.4000000000000004" height="2" fill="#fff"/>
<path d="M746.9000000000001,409.4 L746.9000000000001,417.4" stroke="#333" stroke-width="1.2" fill="none" />
<path d="M750.5,409.4 L750.5,417.4" stroke="#333" stroke-width="1.2" fill="none" />
<text x="734.7" y="427.0" font-size="10" font-family="Liberation Mono" fill="#2a2a2a" text-anchor="start" textLength="27.2" lengthAdjust="spacingAndGlyphs">C1619</text>
<text x="734.7" y="434.2" font-size="10" font-family="Liberation Mono" fill="#2a2a2a" text-anchor="start" textLength="21.8" lengthAdjust="spacingAndGlyphs">OPEN</text>
<path d="M441.5,836 L441.5,445 L833.4,445" stroke="#333" stroke-width="1" fill="none" />
<circle cx="706.3" cy="445" r="1.9" fill="#222"/>
<circle cx="833.4" cy="445" r="1.9" fill="#222"/>
<path d="M631.4,445 L632.9,447.5 L635.9,442.5 L638.9,447.5 L641.9,442.5 L643.4,445" stroke="#333" stroke-width="1" fill="none" />
<text x="624.0" y="458.6" font-size="10" font-family="Liberation Mono" fill="#2a2a2a" text-anchor="start" textLength="27.2" lengthAdjust="spacingAndGlyphs">R1424</text>
<text x="624.0" y="466.20000000000005" font-size="10" font-family="Liberation Mono" fill="#2a2a2a" text-anchor="start" textLength="16.3" lengthAdjust="spacingAndGlyphs">1OO</text>
<rect x="747.5000000000001" y="444" width="2.4000000000000004" height="2" fill="#fff"/>
<path d="M746.9000000000001,441.0 L746.9000000000001,449.0" stroke="#333" stroke-width="1.2" fill="none" />
<path d="M750.5,441.0 L750.5,449.0" stroke="#333" stroke-width="1.2" fill="none" />
<path d="M728.2,452.20000000000005 L734.9000000000001,465.0 L721.5,465.0 Z" fill="#111"/>
<rect x="727.2" y="456.40000000000003" width="2" height="4.6" fill="#fff"/>
<rect x="727.2" y="461.90000000000003" width="2" height="1.6" fill="#fff"/>
<text x="734.7" y="457.9" font-size="10" font-family="Liberation Mono" fill="#2a2a2a" text-anchor="start" textLength="27.2" lengthAdjust="spacingAndGlyphs">C16O7</text>
<text x="734.7" y="466.09999999999997" font-size="10" font-family="Liberation Mono" fill="#2a2a2a" text-anchor="start" textLength="32.6" lengthAdjust="spacingAndGlyphs">1/63OV</text>
<path d="M865.4,254.4 L865.4,836" stroke="#333" stroke-width="1" fill="none" />
<path d="M865.4,254.4 L950.4,254.4 L950.4,359.5 L886.3,359.5" stroke="#333" stroke-width="1" fill="none" />
<circle cx="886.3" cy="254.4" r="1.9" fill="#222"/>
<circle cx="886.3" cy="307.3" r="1.9" fill="#222"/>
<circle cx="886.3" cy="359.5" r="1.9" fill="#222"/>
<circle cx="950.4" cy="307.3" r="1.9" fill="#222"/>
<path d="M875.6,836 L875.6,307.3 L886.3,307.3" stroke="#333" stroke-width="1" fill="none" />
<rect x="885.3" y="285.8" width="2" height="6.4" fill="#fff"/>
<path d="M886.3,285.8 L889.5999999999999,292.2 L883.0,292.2 Z" stroke="#333" stroke-width="1" fill="none" />
<path d="M882.2,285.8 L890.3999999999999,285.8" stroke="#333" stroke-width="1" fill="none" />
<rect x="885.3" y="332.8" width="2" height="6.4" fill="#fff"/>
<path d="M886.3,339.2 L889.5999999999999,332.8 L883.0,332.8 Z" stroke="#333" stroke-width="1" fill="none" />
<path d="M882.2,339.2 L890.3999999999999,339.2" stroke="#333" stroke-width="1" fill="none" />
<rect x="949.4" y="285.8" width="2" height="6.4" fill="#fff"/>
<path d="M950.4,292.2 L953.6999999999999,285.8 L947.1,285.8 Z" stroke="#333" stroke-width="1" fill="none" />
<path d="M946.3000000000001,292.2 L954.4999999999999,292.2" stroke="#333" stroke-width="1" fill="none" />
<rect x="949.4" y="332.8" width="2" height="6.4" fill="#fff"/>
<path d="M950.4,332.8 L953.6999999999999,339.2 L947.1,339.2 Z" stroke="#333" stroke-width="1" fill="none" />
<path d="M946.3000000000001,332.8 L954.4999999999999,332.8" stroke="#333" stroke-width="1" fill="none" />
<path d="M901,266.3 L907.7,279.09999999999997 L894.3,279.09999999999997 Z" fill="#111"/>
<rect x="900" y="270.5" width="2" height="4.6" fill="#fff"/>
<rect x="900" y="276.0" width="2" height="1.6" fill="#fff"/>
<path d="M962,266.3 L968.7,279.09999999999997 L955.3,279.09999999999997 Z" fill="#111"/>
<rect x="961" y="270.5" width="2" height="4.6" fill="#fff"/>
<rect x="961" y="276.0" width="2" height="1.6" fill="#fff"/>
<path d="M901,314.1 L907.7,326.9 L894.3,326.9 Z" fill="#111"/>
<rect x="900" y="318.3" width="2" height="4.6" fill="#fff"/>
<rect x="900" y="323.8" width="2" height="1.6" fill="#fff"/>
<path d="M962,314.1 L968.7,326.9 L955.3,326.9 Z" fill="#111"/>
<rect x="961" y="318.3" width="2" height="4.6" fill="#fff"/>
<rect x="961" y="323.8" width="2" height="1.6" fill="#fff"/>
<text x="890.8" y="289" font-size="10" font-family="Liberation Mono" fill="#2a2a2a" text-anchor="start" textLength="27.2" lengthAdjust="spacingAndGlyphs">D12O1</text>
<text x="892.8" y="297" font-size="10" font-family="Liberation Mono" fill="#2a2a2a" text-anchor="start" textLength="49.0" lengthAdjust="spacingAndGlyphs">1N54O6-BU</text>
<text x="954.9" y="289" font-size="10" font-family="Liberation Mono" fill="#2a2a2a" text-anchor="start" textLength="27.2" lengthAdjust="spacingAndGlyphs">D12O2</text>
<text x="956.9" y="297" font-size="10" font-family="Liberation Mono" fill="#2a2a2a" text-anchor="start" textLength="49.0" lengthAdjust="spacingAndGlyphs">1N54O6-BU</text>
<text x="890.8" y="336.7" font-size="10" font-family="Liberation Mono" fill="#2a2a2a" text-anchor="start" textLength="27.2" lengthAdjust="spacingAndGlyphs">D12O3</text>
<text x="892.8" y="344.3" font-size="10" font-family="Liberation Mono" fill="#2a2a2a" text-anchor="start" textLength="49.0" lengthAdjust="spacingAndGlyphs">1N54O6-BU</text>
<text x="954.9" y="336.7" font-size="10" font-family="Liberation Mono" fill="#2a2a2a" text-anchor="start" textLength="27.2" lengthAdjust="spacingAndGlyphs">D12O4</text>
<text x="956.9" y="344.3" font-size="10" font-family="Liberation Mono" fill="#2a2a2a" text-anchor="start" textLength="49.0" lengthAdjust="spacingAndGlyphs">1N54O6-BU</text>
<rect x="874.0" y="404.5" width="3" height="12" fill="#fff"/>
<path d="M875.5,404.0 L875.5,405.0 L877.1,406.7 L877.1,414.3 L875.5,416.0 L875.5,417.0" stroke="#333" stroke-width="1" fill="none" />
<rect x="877.9" y="406.7" width="2.6" height="7.8" fill="#8a8a8a"/>
<path d="M873.9,409.3 L877.1,409.3" stroke="#333" stroke-width="1.2" fill="none" />
<path d="M873.9,412.2 L877.1,412.2" stroke="#333" stroke-width="1.2" fill="none" />
<text x="883.7" y="410.6" font-size="10" font-family="Liberation Mono" fill="#2a2a2a" text-anchor="start" textLength="32.6" lengthAdjust="spacingAndGlyphs">BC12O3</text>
<text x="883.7" y="418.70000000000005" font-size="10" font-family="Liberation Mono" fill="#2a2a2a" text-anchor="start" textLength="21.8" lengthAdjust="spacingAndGlyphs">BEAD</text>
<path d="M875.6,455.3 L1109.3,455.3" stroke="#333" stroke-width="1" fill="none" />
<circle cx="875.6" cy="455.3" r="1.9" fill="#222"/>
<circle cx="939.4" cy="455.3" r="1.9" fill="#222"/>
<path d="M939.4,455.3 L939.4,392.3 L1008.4,392.3" stroke="#333" stroke-width="1" fill="none" />
<circle cx="939.4" cy="434.2" r="1.9" fill="#222"/>
<path d="M939.4,434.2 L1008.4,434.2 L1008.4,307.3" stroke="#333" stroke-width="1" fill="none" />
<circle cx="1008.4" cy="392.3" r="1.9" fill="#222"/>
<circle cx="1008.4" cy="307.3" r="1.9" fill="#222"/>
<rect x="965.8000000000001" y="391.3" width="2.4000000000000004" height="2" fill="#fff"/>
<path d="M965.2,388.3 L965.2,396.3" stroke="#333" stroke-width="1.2" fill="none" />
<path d="M968.8,388.3 L968.8,396.3" stroke="#333" stroke-width="1.2" fill="none" />
<rect x="965.8000000000001" y="433.2" width="2.4000000000000004" height="2" fill="#fff"/>
<path d="M965.2,430.2 L965.2,438.2" stroke="#333" stroke-width="1.2" fill="none" />
<path d="M968.8,430.2 L968.8,438.2" stroke="#333" stroke-width="1.2" fill="none" />
<text x="955.9" y="376.4" font-size="10" font-family="Liberation Mono" fill="#2a2a2a" text-anchor="start" textLength="27.2" lengthAdjust="spacingAndGlyphs">C1211</text>
<text x="955.9" y="384.5" font-size="10" font-family="Liberation Mono" fill="#2a2a2a" text-anchor="start" textLength="21.8" lengthAdjust="spacingAndGlyphs">OPEN</text>
<text x="955.8" y="418.3" font-size="10" font-family="Liberation Mono" fill="#2a2a2a" text-anchor="start" textLength="27.2" lengthAdjust="spacingAndGlyphs">C1213</text>
<text x="955.8" y="427.0" font-size="10" font-family="Liberation Mono" fill="#2a2a2a" text-anchor="start" textLength="21.8" lengthAdjust="spacingAndGlyphs">OPEN</text>
<path d="M950.4,307.3 L1229,307.3" stroke="#333" stroke-width="1" fill="none" />
<rect x="1015.5" y="305.8" width="12" height="3" fill="#fff"/>
<path d="M1015.0,307.3 L1016.3,307.3 L1018.1,305.1 L1025.6,305.1 L1026.7,307.3 L1028.0,307.3" stroke="#333" stroke-width="1" fill="none" />
<rect x="1017.3" y="302.5" width="8.3" height="2.3" fill="#8a8a8a"/>
<path d="M1020.2,305.1 L1020.2,308.6" stroke="#333" stroke-width="1.2" fill="none" />
<path d="M1023.3,305.1 L1023.3,308.6" stroke="#333" stroke-width="1.2" fill="none" />
<text x="1008.3" y="291.5" font-size="10" font-family="Liberation Mono" fill="#2a2a2a" text-anchor="start" textLength="32.6" lengthAdjust="spacingAndGlyphs">BC12O2</text>
<text x="1008.3" y="299.6" font-size="10" font-family="Liberation Mono" fill="#2a2a2a" text-anchor="start" textLength="21.8" lengthAdjust="spacingAndGlyphs">BEAD</text>
<circle cx="1035.2" cy="307.3" r="1.9" fill="#222"/>
<circle cx="1045.7" cy="307.3" r="1.9" fill="#222"/>
<circle cx="1098.4" cy="307.3" r="1.9" fill="#222"/>
<circle cx="1109.2" cy="307.3" r="1.9" fill="#222"/>
<circle cx="1151.3" cy="307.3" r="1.9" fill="#222"/>
<path d="M1070.5,307.3 L1072.125,309.90000000000003 L1075.375,304.7 L1078.625,309.90000000000003 L1081.875,304.7 L1083.5,307.3" stroke="#333" stroke-width="1" fill="none" />
<path d="M1073.4,271.40000000000003 L1080.1000000000001,284.2 L1066.7,284.2 Z" fill="#111"/>
<rect x="1072.4" y="275.6" width="2" height="4.6" fill="#fff"/>
<rect x="1072.4" y="281.1" width="2" height="1.6" fill="#fff"/>
<text x="1066.7" y="294.6" font-size="10" font-family="Liberation Mono" fill="#2a2a2a" text-anchor="start" textLength="27.2" lengthAdjust="spacingAndGlyphs">R12O1</text>
<text x="1066.7" y="302.20000000000005" font-size="10" font-family="Liberation Mono" fill="#2a2a2a" text-anchor="start" textLength="21.8" lengthAdjust="spacingAndGlyphs">1/2W</text>
<path d="M1035.2,307.3 L1035.2,434.2 L1109.3,434.2" stroke="#333" stroke-width="1" fill="none" />
<rect x="1068.0" y="433.2" width="2.4000000000000004" height="2" fill="#fff"/>
<path d="M1067.4,430.2 L1067.4,438.2" stroke="#333" stroke-width="1.2" fill="none" />
<path d="M1071.0,430.2 L1071.0,438.2" stroke="#333" stroke-width="1.2" fill="none" />
<text x="1058.5" y="418.3" font-size="10" font-family="Liberation Mono" fill="#2a2a2a" text-anchor="start" textLength="27.2" lengthAdjust="spacingAndGlyphs">C1212</text>
<text x="1058.5" y="427.0" font-size="10" font-family="Liberation Mono" fill="#2a2a2a" text-anchor="start" textLength="21.8" lengthAdjust="spacingAndGlyphs">OPEN</text>
<path d="M1045.7,307.3 L1045.7,392.3 L1109.3,392.3" stroke="#333" stroke-width="1" fill="none" />
<circle cx="1109.3" cy="392.3" r="1.9" fill="#222"/>
<path d="M1041.2,332.3 L1050.2,332.3" stroke="#222" stroke-width="1.1" fill="none" />
<path d="M1041.2,335.7 L1050.2,335.7" stroke="#777" stroke-width="1.0" fill="none" />
<path d="M1043.5,332.3 L1041.7,335.7" stroke="#222" stroke-width="1.0" fill="none" />
<path d="M1046.5,332.3 L1044.7,335.7" stroke="#222" stroke-width="1.0" fill="none" />
<path d="M1049.5,332.3 L1047.7,335.7" stroke="#222" stroke-width="1.0" fill="none" />
<path d="M1047.4,328.3 L1051.6000000000001,328.3" stroke="#333" stroke-width="0.9" fill="none" />
<path d="M1049.5,326.3 L1049.5,330.8" stroke="#333" stroke-width="0.9" fill="none" />
<text x="1053.5" y="335.2" font-size="10" font-family="Liberation Mono" fill="#2a2a2a" text-anchor="start" textLength="27.2" lengthAdjust="spacingAndGlyphs">C12O1</text>
<text x="1053.5" y="342.3" font-size="10" font-family="Liberation Mono" fill="#2a2a2a" text-anchor="start" textLength="38.1" lengthAdjust="spacingAndGlyphs">33/2OOV</text>
<path d="M1098.4,307.3 L1098.4,392.3" stroke="#333" stroke-width="1" fill="none" />
<circle cx="1098.4" cy="392.3" r="1.9" fill="#222"/>
<rect x="1097.4" y="371.3" width="2" height="6.4" fill="#fff"/>
<path d="M1098.4,371.3 L1101.7,377.7 L1095.1000000000001,377.7 Z" stroke="#333" stroke-width="1" fill="none" />
<path d="M1094.1000000000001,372.8 L1095.1000000000001,371.3 L1101.7,371.3 L1102.7,369.8" stroke="#333" stroke-width="1" fill="none" />
<text x="1103.2" y="376.2" font-size="10" font-family="Liberation Mono" fill="#2a2a2a" text-anchor="start" textLength="27.2" lengthAdjust="spacingAndGlyphs">D12O8</text>
<text x="1103.2" y="384.0" font-size="10" font-family="Liberation Mono" fill="#2a2a2a" text-anchor="start" textLength="32.6" lengthAdjust="spacingAndGlyphs">1M2OOZ</text>
<path d="M1109.2,307.3 L1109.2,360.4 L1151.3,360.4" stroke="#333" stroke-width="1" fill="none" />
<rect x="1108.2" y="332.75" width="2" height="2.5" fill="#fff"/>
<path d="M1105.2,332.15 L1113.2,332.15" stroke="#333" stroke-width="1.2" fill="none" />
<path d="M1105.2,335.85 L1113.2,335.85" stroke="#333" stroke-width="1.2" fill="none" />
<text x="1115.0" y="328.8" font-size="10" font-family="Liberation Mono" fill="#2a2a2a" text-anchor="start" textLength="27.2" lengthAdjust="spacingAndGlyphs">C12O2</text>
<text x="1115.0" y="338.0" font-size="10" font-family="Liberation Mono" fill="#2a2a2a" text-anchor="start" textLength="27.2" lengthAdjust="spacingAndGlyphs">1OOOP</text>
<text x="1115.0" y="347.2" font-size="10" font-family="Liberation Mono" fill="#2a2a2a" text-anchor="start" textLength="21.8" lengthAdjust="spacingAndGlyphs">/1KV</text>
<path d="M1151.3,222.3 L1151.3,601.4 L1109.3,601.4" stroke="#333" stroke-width="1" fill="none" />
<path d="M1151.3,317.45 L1154.1,318.4 L1148.5,320.3 L1154.1,322.2 L1148.5,324.09999999999997 L1154.1,326.0 L1151.3,326.95" stroke="#333" stroke-width="1" fill="none" />
<path d="M1151.3,339.85 L1154.1,340.8 L1148.5,342.70000000000005 L1154.1,344.6 L1148.5,346.5 L1154.1,348.40000000000003 L1151.3,349.35" stroke="#333" stroke-width="1" fill="none" />
<rect x="1150.3" y="372.3" width="2" height="6.4" fill="#fff"/>
<path d="M1151.3,372.3 L1154.6,378.7 L1148.0,378.7 Z" stroke="#333" stroke-width="1" fill="none" />
<path d="M1147.0,373.8 L1148.0,372.3 L1154.6,372.3 L1155.6,370.8" stroke="#333" stroke-width="1" fill="none" />
<circle cx="1151.3" cy="360.4" r="1.9" fill="#222"/>
<circle cx="1151.3" cy="392.2" r="1.9" fill="#222"/>
<text x="1157.1" y="323.5" font-size="10" font-family="Liberation Mono" fill="#2a2a2a" text-anchor="start" textLength="27.2" lengthAdjust="spacingAndGlyphs">R12O2</text>
<text x="1157.1" y="330.6" font-size="10" font-family="Liberation Mono" fill="#2a2a2a" text-anchor="start" textLength="21.8" lengthAdjust="spacingAndGlyphs">1OOK</text>
<text x="1157.1" y="344.6" font-size="10" font-family="Liberation Mono" fill="#2a2a2a" text-anchor="start" textLength="27.2" lengthAdjust="spacingAndGlyphs">R12O3</text>
<text x="1157.1" y="352.5" font-size="10" font-family="Liberation Mono" fill="#2a2a2a" text-anchor="start" textLength="21.8" lengthAdjust="spacingAndGlyphs">1OOK</text>
<text x="1157.1" y="376.2" font-size="10" font-family="Liberation Mono" fill="#2a2a2a" text-anchor="start" textLength="27.2" lengthAdjust="spacingAndGlyphs">D12O5</text>
<text x="1157.1" y="384.0" font-size="10" font-family="Liberation Mono" fill="#2a2a2a" text-anchor="start" textLength="32.6" lengthAdjust="spacingAndGlyphs">1HB-A2</text>
<path d="M1098.4,392.3 L1236,392.3" stroke="#333" stroke-width="1" fill="none" />
<path d="M1151.3,222.3 L1309.5,222.3 L1309.5,236" stroke="#333" stroke-width="1" fill="none" />
<path d="M1309.5,233.3 L1307.6,233.3 L1307.6,236.5" stroke="#333" stroke-width="0.9" fill="none" />
<rect x="1272.3999999999999" y="221.3" width="2.5999999999999996" height="2" fill="#fff"/>
<path d="M1271.8,218.05 L1271.8,226.55" stroke="#333" stroke-width="1.2" fill="none" />
<path d="M1275.6000000000001,218.05 L1275.6000000000001,226.55" stroke="#333" stroke-width="1.2" fill="none" />
<path d="M1248,199.9 L1254.7,212.70000000000002 L1241.3,212.70000000000002 Z" fill="#111"/>
<rect x="1247" y="204.10000000000002" width="2" height="4.6" fill="#fff"/>
<rect x="1247" y="209.60000000000002" width="2" height="1.6" fill="#fff"/>
<text x="1260.6" y="206.3" font-size="10" font-family="Liberation Mono" fill="#2a2a2a" text-anchor="start" textLength="27.2" lengthAdjust="spacingAndGlyphs">C12O7</text>
<text x="1260.6" y="214.20000000000002" font-size="10" font-family="Liberation Mono" fill="#2a2a2a" text-anchor="start" textLength="21.8" lengthAdjust="spacingAndGlyphs">OPEN</text>
<path d="M1248,255.20000000000002 L1254.7,268.0 L1241.3,268.0 Z" fill="#111"/>
<rect x="1247" y="259.40000000000003" width="2" height="4.6" fill="#fff"/>
<rect x="1247" y="264.90000000000003" width="2" height="1.6" fill="#fff"/>
<text x="1240.0" y="278.7" font-size="10" font-family="Liberation Mono" fill="#2a2a2a" text-anchor="start" textLength="27.2" lengthAdjust="spacingAndGlyphs">T12O1</text>
<text x="1240.0" y="285.8" font-size="10" font-family="Liberation Mono" fill="#2a2a2a" text-anchor="start" textLength="59.8" lengthAdjust="spacingAndGlyphs">POWER TRANS</text>
<path d="M1236,307.2 L1236,291.9 L1308,291.9 L1308,514.3 L1236,514.3 L1236,307.2" stroke="#333" stroke-width="1" fill="none" />
<path d="M1236,307.2 L1260.6,307.2" stroke="#333" stroke-width="1" fill="none" />
<path d="M1236,349.3 L1260.6,349.3" stroke="#333" stroke-width="1" fill="none" />
<path d="M1236,391.8 L1260.6,391.8" stroke="#333" stroke-width="1" fill="none" />
<path d="M1236,455.8 L1260.6,455.8" stroke="#333" stroke-width="1" fill="none" />
<path d="M1236,498.5 L1260.6,498.5" stroke="#333" stroke-width="1" fill="none" />
<path d="M1287.5,307.2 L1308,307.2" stroke="#333" stroke-width="1" fill="none" />
<path d="M1287.5,391.8 L1308,391.8" stroke="#333" stroke-width="1" fill="none" />
<path d="M1287.5,424.2 L1308,424.2" stroke="#333" stroke-width="1" fill="none" />
<path d="M1287.5,498.5 L1308,498.5" stroke="#333" stroke-width="1" fill="none" />
<rect x="1260.2" y="307.2" width="5.8" height="84.6" fill="#111"/>
<rect x="1260.2" y="455.8" width="5.8" height="42.7" fill="#111"/>
<rect x="1281.4" y="307.2" width="6.4" height="84.6" fill="#111"/>
<rect x="1281.4" y="424.2" width="6.4" height="74.3" fill="#111"/>
<path d="M1271,307.2 L1271,498.5" stroke="#111" stroke-width="1.8" fill="none" />
<path d="M1276,307.2 L1276,498.5" stroke="#111" stroke-width="1.8" fill="none" />
<circle cx="1257.2" cy="309.8" r="1.6" fill="#222"/>
<circle cx="1290.4" cy="309.8" r="1.6" fill="#222"/>
<circle cx="1257.2" cy="352.5" r="1.6" fill="#222"/>
<circle cx="1290.4" cy="426.9" r="1.6" fill="#222"/>
<circle cx="1257.2" cy="458.5" r="1.6" fill="#222"/>
<circle cx="1236.5" cy="307.2" r="7.7" fill="#fff" stroke="#333" stroke-width="1"/>
<text x="1236.5" y="310.8" font-size="10.5" font-family="Liberation Sans" fill="#2a2a2a" text-anchor="middle" textLength="5.6" lengthAdjust="spacingAndGlyphs">5</text>
<circle cx="1236.5" cy="349.3" r="7.7" fill="#fff" stroke="#333" stroke-width="1"/>
<text x="1236.5" y="352.90000000000003" font-size="10.5" font-family="Liberation Sans" fill="#2a2a2a" text-anchor="middle" textLength="5.6" lengthAdjust="spacingAndGlyphs">6</text>
<circle cx="1236.5" cy="391.8" r="7.7" fill="#fff" stroke="#333" stroke-width="1"/>
<text x="1236.5" y="395.40000000000003" font-size="10.5" font-family="Liberation Sans" fill="#2a2a2a" text-anchor="middle" textLength="5.6" lengthAdjust="spacingAndGlyphs">7</text>
<circle cx="1236.5" cy="455.8" r="7.7" fill="#fff" stroke="#333" stroke-width="1"/>
<text x="1236.5" y="459.40000000000003" font-size="10.5" font-family="Liberation Sans" fill="#2a2a2a" text-anchor="middle" textLength="5.6" lengthAdjust="spacingAndGlyphs">9</text>
<circle cx="1236.5" cy="498.5" r="7.7" fill="#fff" stroke="#333" stroke-width="1"/>
<text x="1236.5" y="502.1" font-size="10.5" font-family="Liberation Sans" fill="#2a2a2a" text-anchor="middle" textLength="11.2" lengthAdjust="spacingAndGlyphs">10</text>
<circle cx="1308" cy="307.2" r="7.7" fill="#fff" stroke="#333" stroke-width="1"/>
<text x="1308" y="310.8" font-size="10.5" font-family="Liberation Sans" fill="#2a2a2a" text-anchor="middle" textLength="5.6" lengthAdjust="spacingAndGlyphs">1</text>
<circle cx="1308" cy="391.8" r="7.7" fill="#fff" stroke="#333" stroke-width="1"/>
<text x="1308" y="395.40000000000003" font-size="10.5" font-family="Liberation Sans" fill="#2a2a2a" text-anchor="middle" textLength="5.6" lengthAdjust="spacingAndGlyphs">3</text>
<circle cx="1308" cy="424.2" r="7.7" fill="#fff" stroke="#333" stroke-width="1"/>
<text x="1308" y="427.8" font-size="10.5" font-family="Liberation Sans" fill="#2a2a2a" text-anchor="middle" textLength="5.6" lengthAdjust="spacingAndGlyphs">2</text>
<circle cx="1308" cy="498.5" r="7.7" fill="#fff" stroke="#333" stroke-width="1"/>
<text x="1308" y="502.1" font-size="10.5" font-family="Liberation Sans" fill="#2a2a2a" text-anchor="middle" textLength="5.6" lengthAdjust="spacingAndGlyphs">4</text>
<path d="M1228.8,455.8 L1215.9,455.8 L1215.9,465" stroke="#333" stroke-width="1" fill="none" />
<path d="M1211.4,465.5 L1220.4,465.5" stroke="#666" stroke-width="1" fill="none" />
<path d="M1212.6000000000001,466.3 L1219.2,466.3 L1215.9,470.0 Z" fill="#9a9a9a" stroke="#888" stroke-width="0.6"/>
<path d="M1228.8,498.5 L1167.3,498.5 L1167.3,721" stroke="#333" stroke-width="1" fill="none" />
<rect x="1188" y="497.0" width="12" height="3" fill="#fff"/>
<path d="M1187.5,498.5 L1188.8,498.5 L1190.6,496.3 L1198.1,496.3 L1199.2,498.5 L1200.5,498.5" stroke="#333" stroke-width="1" fill="none" />
<rect x="1189.8" y="493.7" width="8.3" height="2.3" fill="#8a8a8a"/>
<path d="M1192.7,496.3 L1192.7,499.8" stroke="#333" stroke-width="1.2" fill="none" />
<path d="M1195.8,496.3 L1195.8,499.8" stroke="#333" stroke-width="1.2" fill="none" />
<text x="1180.8" y="482.2" font-size="10" font-family="Liberation Mono" fill="#2a2a2a" text-anchor="start" textLength="32.6" lengthAdjust="spacingAndGlyphs">BC12O1</text>
<text x="1180.8" y="490.59999999999997" font-size="10" font-family="Liberation Mono" fill="#2a2a2a" text-anchor="start" textLength="21.8" lengthAdjust="spacingAndGlyphs">BEAD</text>
<path d="M1109.3,392.3 L1109.3,601.4" stroke="#333" stroke-width="1" fill="none" />
<circle cx="1109.3" cy="434.2" r="1.9" fill="#222"/>
<circle cx="1109.3" cy="455.3" r="1.9" fill="#222"/>
<circle cx="1109.3" cy="529.8" r="1.9" fill="#222"/>
<circle cx="1109.3" cy="553.8" r="1.9" fill="#222"/>
<circle cx="1109.3" cy="601.4" r="1.9" fill="#222"/>
<rect x="1108.3" y="573.4" width="2" height="2.8" fill="#fff"/>
<path d="M1105.3,572.8 L1113.3,572.8" stroke="#333" stroke-width="1.2" fill="none" />
<path d="M1105.3,576.8 L1113.3,576.8" stroke="#333" stroke-width="1.2" fill="none" />
<text x="1114.3" y="570.0" font-size="10" font-family="Liberation Mono" fill="#2a2a2a" text-anchor="start" textLength="27.2" lengthAdjust="spacingAndGlyphs">C12O8</text>
<text x="1114.3" y="579.2" font-size="10" font-family="Liberation Mono" fill="#2a2a2a" text-anchor="start" textLength="16.3" lengthAdjust="spacingAndGlyphs">15P</text>
<text x="1114.3" y="588.4" font-size="10" font-family="Liberation Mono" fill="#2a2a2a" text-anchor="start" textLength="21.8" lengthAdjust="spacingAndGlyphs">/2KV</text>
<path d="M1167.3,570.15 L1170.1,571.1 L1164.5,573.0 L1170.1,574.9 L1164.5,576.8 L1170.1,578.6999999999999 L1167.3,579.65" stroke="#333" stroke-width="1" fill="none" />
<rect x="1166.3" y="602.8" width="2" height="6.4" fill="#fff"/>
<path d="M1167.3,609.2 L1170.6,602.8 L1164.0,602.8 Z" stroke="#333" stroke-width="1" fill="none" />
<path d="M1163.2,609.2 L1171.3999999999999,609.2" stroke="#333" stroke-width="1" fill="none" />
<circle cx="1167.3" cy="625" r="1.9" fill="#222"/>
<path d="M1162.8,642.5 L1171.8,642.5" stroke="#222" stroke-width="1.1" fill="none" />
<path d="M1162.8,645.9000000000001 L1171.8,645.9000000000001" stroke="#777" stroke-width="1.0" fill="none" />
<path d="M1165.1,642.5 L1163.3,645.9000000000001" stroke="#222" stroke-width="1.0" fill="none" />
<path d="M1168.1,642.5 L1166.3,645.9000000000001" stroke="#222" stroke-width="1.0" fill="none" />
<path d="M1171.1,642.5 L1169.3,645.9000000000001" stroke="#222" stroke-width="1.0" fill="none" />
<path d="M1169.0,638.5 L1173.2,638.5" stroke="#333" stroke-width="0.9" fill="none" />
<path d="M1171.1,636.5 L1171.1,641.0" stroke="#333" stroke-width="0.9" fill="none" />
<text x="1172.5" y="574.9" font-size="10" font-family="Liberation Mono" fill="#2a2a2a" text-anchor="start" textLength="27.2" lengthAdjust="spacingAndGlyphs">R12O4</text>
<text x="1172.5" y="582.8" font-size="10" font-family="Liberation Mono" fill="#2a2a2a" text-anchor="start" textLength="10.9" lengthAdjust="spacingAndGlyphs">22</text>
<text x="1172.5" y="606.7" font-size="10" font-family="Liberation Mono" fill="#2a2a2a" text-anchor="start" textLength="27.2" lengthAdjust="spacingAndGlyphs">D12O6</text>
<text x="1172.5" y="614.7" font-size="10" font-family="Liberation Mono" fill="#2a2a2a" text-anchor="start" textLength="38.1" lengthAdjust="spacingAndGlyphs">FR1O4-B</text>
<text x="1175.7" y="644.8" font-size="10" font-family="Liberation Mono" fill="#2a2a2a" text-anchor="start" textLength="27.2" lengthAdjust="spacingAndGlyphs">C12O4</text>
<text x="1175.7" y="652.3" font-size="10" font-family="Liberation Mono" fill="#2a2a2a" text-anchor="start" textLength="27.2" lengthAdjust="spacingAndGlyphs">1/5OV</text>
<path d="M996.5,467.20000000000005 L1003.2,480.0 L989.8,480.0 Z" fill="#111"/>
<rect x="995.5" y="471.40000000000003" width="2" height="4.6" fill="#fff"/>
<rect x="995.5" y="476.90000000000003" width="2" height="1.6" fill="#fff"/>
<text x="987.4" y="490.8" font-size="11.4" font-family="Liberation Mono" fill="#111" text-anchor="start" font-weight="bold" textLength="32.7" lengthAdjust="spacingAndGlyphs">IC12O1</text>
<text x="987.4" y="500.5" font-size="10" font-family="Liberation Mono" fill="#2a2a2a" text-anchor="start" textLength="65.3" lengthAdjust="spacingAndGlyphs">MIP2F3OMSSCF</text>
<text x="987.4" y="511.3" font-size="10" font-family="Liberation Mono" fill="#2a2a2a" text-anchor="start" textLength="59.8" lengthAdjust="spacingAndGlyphs">(SWITCHING)</text>
<path d="M987,516.7 H1010.1 A8.5,8.5 0 0 0 1027.1,516.7 H1051 V614.3 H987 Z" fill="none" stroke="#111" stroke-width="2.4"/>
<path d="M907.8,763.2 L907.8,530 L971.6,530" stroke="#333" stroke-width="1" fill="none" />
<path d="M923.3,795.1 L923.3,554 L971.6,554" stroke="#333" stroke-width="1" fill="none" />
<path d="M939.4,763.2 L939.4,578.1 L971.6,578.1" stroke="#333" stroke-width="1" fill="none" />
<path d="M955.2,662.5 L955.2,601.8 L971.6,601.8" stroke="#333" stroke-width="1" fill="none" />
<circle cx="978.8" cy="530" r="7.5" fill="#fff" stroke="#333" stroke-width="1"/>
<text x="978.8" y="533.6" font-size="10.5" font-family="Liberation Sans" fill="#2a2a2a" text-anchor="middle" textLength="5.6" lengthAdjust="spacingAndGlyphs">1</text>
<circle cx="978.8" cy="554" r="7.5" fill="#fff" stroke="#333" stroke-width="1"/>
<text x="978.8" y="557.6" font-size="10.5" font-family="Liberation Sans" fill="#2a2a2a" text-anchor="middle" textLength="5.6" lengthAdjust="spacingAndGlyphs">2</text>
<circle cx="978.8" cy="578.1" r="7.5" fill="#fff" stroke="#333" stroke-width="1"/>
<text x="978.8" y="581.7" font-size="10.5" font-family="Liberation Sans" fill="#2a2a2a" text-anchor="middle" textLength="5.6" lengthAdjust="spacingAndGlyphs">3</text>
<circle cx="978.8" cy="601.8" r="7.5" fill="#fff" stroke="#333" stroke-width="1"/>
<text x="978.8" y="605.4" font-size="10.5" font-family="Liberation Sans" fill="#2a2a2a" text-anchor="middle" textLength="5.6" lengthAdjust="spacingAndGlyphs">4</text>
<path d="M1066,529.8 L1109.3,529.8" stroke="#333" stroke-width="1" fill="none" />
<circle cx="1058.9" cy="529.8" r="7.5" fill="#fff" stroke="#333" stroke-width="1"/>
<text x="1058.9" y="533.4" font-size="10.5" font-family="Liberation Sans" fill="#2a2a2a" text-anchor="middle" textLength="5.6" lengthAdjust="spacingAndGlyphs">8</text>
<path d="M1066,553.8 L1109.3,553.8" stroke="#333" stroke-width="1" fill="none" />
<circle cx="1058.9" cy="553.8" r="7.5" fill="#fff" stroke="#333" stroke-width="1"/>
<text x="1058.9" y="557.4" font-size="10.5" font-family="Liberation Sans" fill="#2a2a2a" text-anchor="middle" textLength="5.6" lengthAdjust="spacingAndGlyphs">7</text>
<path d="M1066,601.4 L1109.3,601.4" stroke="#333" stroke-width="1" fill="none" />
<circle cx="1058.9" cy="601.4" r="7.5" fill="#fff" stroke="#333" stroke-width="1"/>
<text x="1058.9" y="605.0" font-size="10.5" font-family="Liberation Sans" fill="#2a2a2a" text-anchor="middle" textLength="5.6" lengthAdjust="spacingAndGlyphs">5</text>
<text x="990" y="533.5" font-size="10" font-family="Liberation Mono" fill="#2a2a2a" text-anchor="start" textLength="16.2" lengthAdjust="spacingAndGlyphs">VDD</text>
<text x="990" y="557.5" font-size="10" font-family="Liberation Mono" fill="#2a2a2a" text-anchor="start" textLength="10.8" lengthAdjust="spacingAndGlyphs">FB</text>
<text x="990" y="581.5" font-size="10" font-family="Liberation Mono" fill="#2a2a2a" text-anchor="start" textLength="10.8" lengthAdjust="spacingAndGlyphs">CL</text>
<text x="990" y="605.5" font-size="10" font-family="Liberation Mono" fill="#2a2a2a" text-anchor="start" textLength="16.2" lengthAdjust="spacingAndGlyphs">VCC</text>
<text x="1049" y="533.5" font-size="10" font-family="Liberation Mono" fill="#2a2a2a" text-anchor="end" textLength="32.4" lengthAdjust="spacingAndGlyphs">SOURCE</text>
<text x="1049" y="557.5" font-size="10" font-family="Liberation Mono" fill="#2a2a2a" text-anchor="end" textLength="32.4" lengthAdjust="spacingAndGlyphs">SOURCE</text>
<text x="1049" y="605.5" font-size="10" font-family="Liberation Mono" fill="#2a2a2a" text-anchor="end" textLength="27.0" lengthAdjust="spacingAndGlyphs">DRAIN</text>
<text x="969" y="528" font-size="10" font-family="Liberation Mono" fill="#2a2a2a" text-anchor="end" textLength="16.2" lengthAdjust="spacingAndGlyphs">6.1</text>
<text x="969" y="550" font-size="10" font-family="Liberation Mono" fill="#2a2a2a" text-anchor="end" textLength="5.4" lengthAdjust="spacingAndGlyphs">O</text>
<text x="969" y="575.5" font-size="10" font-family="Liberation Mono" fill="#2a2a2a" text-anchor="end" textLength="16.3" lengthAdjust="spacingAndGlyphs">2.5</text>
<text x="969" y="599.2" font-size="10" font-family="Liberation Mono" fill="#2a2a2a" text-anchor="end" textLength="20.8" lengthAdjust="spacingAndGlyphs">14.7</text>
<text x="1067" y="527.4" font-size="10" font-family="Liberation Mono" fill="#2a2a2a" text-anchor="start" textLength="5.4" lengthAdjust="spacingAndGlyphs">O</text>
<text x="1067" y="551.6" font-size="10" font-family="Liberation Mono" fill="#2a2a2a" text-anchor="start" textLength="5.4" lengthAdjust="spacingAndGlyphs">O</text>
<text x="1070" y="599" font-size="10" font-family="Liberation Mono" fill="#2a2a2a" text-anchor="start" textLength="26.0" lengthAdjust="spacingAndGlyphs">141.7</text>
<path d="M955.2,625 L1167.3,625" stroke="#333" stroke-width="1" fill="none" />
<circle cx="955.2" cy="625" r="1.9" fill="#222"/>
<circle cx="998.2" cy="625" r="1.9" fill="#222"/>
<circle cx="1045.6" cy="625" r="1.9" fill="#222"/>
<circle cx="1088" cy="625" r="1.9" fill="#222"/>
<path d="M955.2,640.0 L958.0,641.1 L952.4000000000001,643.3 L958.0,645.5 L952.4000000000001,647.7 L958.0,649.9 L955.2,651.0" stroke="#333" stroke-width="1" fill="none" />
<path d="M998.2,625 L998.2,662.5 L939.4,662.5" stroke="#333" stroke-width="1" fill="none" />
<circle cx="939.4" cy="662.5" r="1.9" fill="#222"/>
<circle cx="955.2" cy="662.5" r="1.9" fill="#222"/>
<rect x="997.2" y="642.0" width="2" height="3.0" fill="#fff"/>
<path d="M994.2,641.4 L1002.2,641.4" stroke="#333" stroke-width="1.2" fill="none" />
<path d="M994.2,645.6 L1002.2,645.6" stroke="#333" stroke-width="1.2" fill="none" />
<text x="960.5" y="644.4" font-size="10" font-family="Liberation Mono" fill="#2a2a2a" text-anchor="start" textLength="27.2" lengthAdjust="spacingAndGlyphs">R12O5</text>
<text x="960.5" y="652.0" font-size="10" font-family="Liberation Mono" fill="#2a2a2a" text-anchor="start" textLength="21.8" lengthAdjust="spacingAndGlyphs">47OK</text>
<text x="1003.0" y="644.4" font-size="10" font-family="Liberation Mono" fill="#2a2a2a" text-anchor="start" textLength="27.2" lengthAdjust="spacingAndGlyphs">C12O5</text>
<text x="1003.0" y="652.0" font-size="10" font-family="Liberation Mono" fill="#2a2a2a" text-anchor="start" textLength="27.2" lengthAdjust="spacingAndGlyphs">22OOP</text>
<path d="M1045.6,625 L1045.6,721" stroke="#333" stroke-width="1" fill="none" />
<rect x="1044.6" y="642.0" width="2" height="3.0" fill="#fff"/>
<path d="M1041.6,641.4 L1049.6,641.4" stroke="#333" stroke-width="1.2" fill="none" />
<path d="M1041.6,645.6 L1049.6,645.6" stroke="#333" stroke-width="1.2" fill="none" />
<text x="1050.5" y="644.4" font-size="10" font-family="Liberation Mono" fill="#2a2a2a" text-anchor="start" textLength="27.2" lengthAdjust="spacingAndGlyphs">C121O</text>
<text x="1050.5" y="652.0" font-size="10" font-family="Liberation Mono" fill="#2a2a2a" text-anchor="start" textLength="16.3" lengthAdjust="spacingAndGlyphs">O.1</text>
<path d="M1088,625 L1088,721" stroke="#333" stroke-width="1" fill="none" />
<rect x="1087" y="641.3" width="2" height="6.4" fill="#fff"/>
<path d="M1088,641.3 L1091.3,647.7 L1084.7,647.7 Z" stroke="#333" stroke-width="1" fill="none" />
<path d="M1083.7,642.8 L1084.7,641.3 L1091.3,641.3 L1092.3,639.8" stroke="#333" stroke-width="1" fill="none" />
<text x="1092.8" y="644.8" font-size="10" font-family="Liberation Mono" fill="#2a2a2a" text-anchor="start" textLength="27.2" lengthAdjust="spacingAndGlyphs">D12O7</text>
<text x="1092.8" y="652.3" font-size="10" font-family="Liberation Mono" fill="#2a2a2a" text-anchor="start" textLength="49.0" lengthAdjust="spacingAndGlyphs">33BSB-T26</text>
<rect x="938.4" y="685.3" width="2" height="6.4" fill="#fff"/>
<path d="M939.4,685.3 L942.6999999999999,691.7 L936.1,691.7 Z" stroke="#333" stroke-width="1" fill="none" />
<path d="M935.1,686.8 L936.1,685.3 L942.6999999999999,685.3 L943.6999999999999,683.8" stroke="#333" stroke-width="1" fill="none" />
<path d="M951.5,666.0 L958.2,678.8 L944.8,678.8 Z" fill="#111"/>
<rect x="950.5" y="670.1999999999999" width="2" height="4.6" fill="#fff"/>
<rect x="950.5" y="675.6999999999999" width="2" height="1.6" fill="#fff"/>
<text x="944.8" y="689.6" font-size="10" font-family="Liberation Mono" fill="#2a2a2a" text-anchor="start" textLength="27.2" lengthAdjust="spacingAndGlyphs">D12O9</text>
<text x="944.8" y="697.1" font-size="10" font-family="Liberation Mono" fill="#2a2a2a" text-anchor="start" textLength="49.0" lengthAdjust="spacingAndGlyphs">39BSB-T26</text>
<path d="M875.6,721 L1167.3,721" stroke="#333" stroke-width="1" fill="none" />
<circle cx="875.6" cy="721" r="1.9" fill="#222"/>
<circle cx="939.6" cy="721" r="1.9" fill="#222"/>
<circle cx="1035.1" cy="721" r="1.9" fill="#222"/>
<circle cx="1045.6" cy="721" r="1.9" fill="#222"/>
<circle cx="1088" cy="721" r="1.9" fill="#222"/>
<circle cx="1109.5" cy="721" r="1.9" fill="#222"/>
<circle cx="1130.3" cy="721" r="1.9" fill="#222"/>
<path d="M907.8,763.2 L1235,763.2" stroke="#333" stroke-width="1" fill="none" />
<path d="M923.3,795.1 L1235,795.1" stroke="#333" stroke-width="1" fill="none" />
<circle cx="939.6" cy="763.2" r="1.9" fill="#222"/>
<circle cx="1035.1" cy="763.2" r="1.9" fill="#222"/>
<circle cx="1109.5" cy="795.1" r="1.9" fill="#222"/>
<circle cx="1130.3" cy="795.1" r="1.9" fill="#222"/>
<rect x="938.6" y="742.6" width="2" height="2.8" fill="#fff"/>
<path d="M935.6,742.0 L943.6,742.0" stroke="#333" stroke-width="1.2" fill="none" />
<path d="M935.6,746.0 L943.6,746.0" stroke="#333" stroke-width="1.2" fill="none" />
<text x="945.2" y="745.3" font-size="10" font-family="Liberation Mono" fill="#2a2a2a" text-anchor="start" textLength="27.2" lengthAdjust="spacingAndGlyphs">C12O3</text>
<text x="945.2" y="752.5999999999999" font-size="10" font-family="Liberation Mono" fill="#2a2a2a" text-anchor="start" textLength="21.8" lengthAdjust="spacingAndGlyphs">O.22</text>
<path d="M1035.1,721 L1035.1,763.2" stroke="#333" stroke-width="1" fill="none" />
<rect x="1034.1" y="741.8" width="2" height="6.4" fill="#fff"/>
<path d="M1035.1,748.2 L1038.3999999999999,741.8 L1031.8,741.8 Z" stroke="#333" stroke-width="1" fill="none" />
<path d="M1030.8,746.7 L1031.8,748.2 L1038.3999999999999,748.2 L1039.3999999999999,749.7" stroke="#333" stroke-width="1" fill="none" />
<path d="M989.1,722.6 L995.8000000000001,735.4 L982.4,735.4 Z" fill="#111"/>
<rect x="988.1" y="726.8" width="2" height="4.6" fill="#fff"/>
<rect x="988.1" y="732.3" width="2" height="1.6" fill="#fff"/>
<text x="981.8" y="745.3" font-size="10" font-family="Liberation Mono" fill="#2a2a2a" text-anchor="start" textLength="27.2" lengthAdjust="spacingAndGlyphs">D121O</text>
<text x="981.8" y="752.5999999999999" font-size="10" font-family="Liberation Mono" fill="#2a2a2a" text-anchor="start" textLength="49.0" lengthAdjust="spacingAndGlyphs">39BSB-T26</text>
<path d="M1109.5,721 L1109.5,795.1" stroke="#333" stroke-width="1" fill="none" />
<rect x="1108.5" y="744.8" width="2" height="6.4" fill="#fff"/>
<path d="M1109.5,751.2 L1112.8,744.8 L1106.2,744.8 Z" stroke="#333" stroke-width="1" fill="none" />
<path d="M1105.2,749.7 L1106.2,751.2 L1112.8,751.2 L1113.8,752.7" stroke="#333" stroke-width="1" fill="none" />
<path d="M1060.7,722.4 L1067.4,735.1999999999999 L1054.0,735.1999999999999 Z" fill="#111"/>
<rect x="1059.7" y="726.5999999999999" width="2" height="4.6" fill="#fff"/>
<rect x="1059.7" y="732.0999999999999" width="2" height="1.6" fill="#fff"/>
<text x="1050.8" y="745.6" font-size="10" font-family="Liberation Mono" fill="#2a2a2a" text-anchor="start" textLength="27.2" lengthAdjust="spacingAndGlyphs">D1211</text>
<text x="1050.8" y="753.2" font-size="10" font-family="Liberation Mono" fill="#2a2a2a" text-anchor="start" textLength="49.0" lengthAdjust="spacingAndGlyphs">39BSB-T26</text>
<path d="M1130.3,721 L1130.3,795.1" stroke="#333" stroke-width="1" fill="none" />
<rect x="1129.3" y="746.4" width="2" height="3.2" fill="#fff"/>
<path d="M1126.3,745.8 L1134.3,745.8" stroke="#333" stroke-width="1.2" fill="none" />
<path d="M1126.3,750.2 L1134.3,750.2" stroke="#333" stroke-width="1.2" fill="none" />
<text x="1135.7" y="745.6" font-size="10" font-family="Liberation Mono" fill="#2a2a2a" text-anchor="start" textLength="27.2" lengthAdjust="spacingAndGlyphs">C12O6</text>
<text x="1135.7" y="753.2" font-size="10" font-family="Liberation Mono" fill="#2a2a2a" text-anchor="start" textLength="21.8" lengthAdjust="spacingAndGlyphs">33OP</text>
<path d="M1187.6,795.1 L1188.85,797.7 L1191.35,792.5 L1193.85,797.7 L1196.35,792.5 L1197.6,795.1" stroke="#333" stroke-width="1" fill="none" />
<text x="1178.7" y="782.0" font-size="10" font-family="Liberation Mono" fill="#2a2a2a" text-anchor="start" textLength="27.2" lengthAdjust="spacingAndGlyphs">R12O6</text>
<text x="1178.7" y="789.9" font-size="10" font-family="Liberation Mono" fill="#2a2a2a" text-anchor="start" textLength="16.3" lengthAdjust="spacingAndGlyphs">36K</text>
<text x="1215.4" y="761.2" font-size="10" font-family="Liberation Mono" fill="#2a2a2a" text-anchor="start" textLength="16.5" lengthAdjust="spacingAndGlyphs">6.1</text>
<text x="1215.4" y="792.9" font-size="10" font-family="Liberation Mono" fill="#2a2a2a" text-anchor="start" textLength="16.5" lengthAdjust="spacingAndGlyphs">2.9</text>
<path d="M1251,706.3000000000001 L1257.7,719.1 L1244.3,719.1 Z" fill="#111"/>
<rect x="1250" y="710.5" width="2" height="4.6" fill="#fff"/>
<rect x="1250" y="716.0" width="2" height="1.6" fill="#fff"/>
<text x="1244.7" y="729.5" font-size="11.4" font-family="Liberation Mono" fill="#111" text-anchor="start" font-weight="bold" textLength="32.7" lengthAdjust="spacingAndGlyphs">IC12O2</text>
<text x="1244.7" y="739.4" font-size="10" font-family="Liberation Mono" fill="#2a2a2a" text-anchor="start" textLength="49.0" lengthAdjust="spacingAndGlyphs">LTV817MCF</text>
<text x="1244.7" y="750.3" font-size="10" font-family="Liberation Mono" fill="#2a2a2a" text-anchor="start" textLength="54.4" lengthAdjust="spacingAndGlyphs">(FEEDBACK)</text>
<rect x="1250" y="755.2" width="48.1" height="48.6" fill="#fff" stroke="#111" stroke-width="2.4"/>
<path d="M1250,763.2 L1260.5,763.2 L1260.5,795.1 L1250,795.1" stroke="#333" stroke-width="1" fill="none" />
<circle cx="1262.9" cy="779.9" r="5.2" fill="none" stroke="#111" stroke-width="1.5"/>
<path d="M1261,776 L1261,784" stroke="#333" stroke-width="1.2" fill="none" />
<path d="M1261,779 L1265,775" stroke="#333" stroke-width="0.8" fill="none" />
<path d="M1261,781 L1265,785" stroke="#333" stroke-width="0.8" fill="none" />
<path d="M1271,777 L1275,780" stroke="#333" stroke-width="0.8" fill="none" />
<path d="M1271,782 L1275,785" stroke="#333" stroke-width="0.8" fill="none" />
<path d="M1298.1,763.2 L1287.6,763.2 L1287.6,795.1 L1298.1,795.1" stroke="#333" stroke-width="1" fill="none" />
<path d="M1281.5,773.5 H1293.7 L1287.6,783.8 Z" fill="#fff" stroke="#222" stroke-width="1"/>
<path d="M1281.5,784.6 L1293.7,784.6" stroke="#333" stroke-width="1" fill="none" />
<circle cx="1242.1" cy="763.2" r="7.2" fill="#fff" stroke="#333" stroke-width="1"/>
<text x="1242.1" y="766.8000000000001" font-size="10.5" font-family="Liberation Sans" fill="#2a2a2a" text-anchor="middle" textLength="5.6" lengthAdjust="spacingAndGlyphs">4</text>
<circle cx="1242.1" cy="795.1" r="7.2" fill="#fff" stroke="#333" stroke-width="1"/>
<text x="1242.1" y="798.7" font-size="10.5" font-family="Liberation Sans" fill="#2a2a2a" text-anchor="middle" textLength="5.6" lengthAdjust="spacingAndGlyphs">3</text>
<circle cx="1305.5" cy="763.2" r="7.2" fill="#fff" stroke="#333" stroke-width="1"/>
<text x="1305.5" y="766.8000000000001" font-size="10.5" font-family="Liberation Sans" fill="#2a2a2a" text-anchor="middle" textLength="5.6" lengthAdjust="spacingAndGlyphs">1</text>
<circle cx="1305.5" cy="795.1" r="7.2" fill="#fff" stroke="#333" stroke-width="1"/>
<text x="1305.5" y="798.7" font-size="10.5" font-family="Liberation Sans" fill="#2a2a2a" text-anchor="middle" textLength="5.6" lengthAdjust="spacingAndGlyphs">2</text>
<text x="7.7" y="520.5" font-size="10" font-family="Liberation Mono" fill="#2a2a2a" text-anchor="start" textLength="43.5" lengthAdjust="spacingAndGlyphs">CONTINUE</text>
<text x="7.7" y="530.0" font-size="10" font-family="Liberation Mono" fill="#2a2a2a" text-anchor="start" textLength="76.2" lengthAdjust="spacingAndGlyphs">POWER SUPPLY 3</text>
<text x="2.5" y="528" font-size="17" font-family="Liberation Sans" fill="#444" text-anchor="start" textLength="3.5" lengthAdjust="spacingAndGlyphs">(</text>
<text x="86.5" y="528" font-size="17" font-family="Liberation Sans" fill="#444" text-anchor="start" textLength="3.5" lengthAdjust="spacingAndGlyphs">)</text>
<text x="7.7" y="584.2" font-size="10" font-family="Liberation Mono" fill="#2a2a2a" text-anchor="start" textLength="43.5" lengthAdjust="spacingAndGlyphs">CONTINUE</text>
<text x="7.7" y="593.7" font-size="10" font-family="Liberation Mono" fill="#2a2a2a" text-anchor="start" textLength="76.2" lengthAdjust="spacingAndGlyphs">POWER SUPPLY 2</text>
<text x="2.5" y="591.7" font-size="17" font-family="Liberation Sans" fill="#444" text-anchor="start" textLength="3.5" lengthAdjust="spacingAndGlyphs">(</text>
<text x="86.5" y="591.7" font-size="17" font-family="Liberation Sans" fill="#444" text-anchor="start" textLength="3.5" lengthAdjust="spacingAndGlyphs">)</text>
<path d="M11.2,540.85 L19.2,532.7 H103.9 L111.9,540.85 L103.9,549 H19.2 Z" fill="#fff" stroke="#333" stroke-width="1"/>
<text x="97.6" y="544.15" font-size="10" font-family="Liberation Mono" fill="#2a2a2a" text-anchor="end" textLength="26.5" lengthAdjust="spacingAndGlyphs">+345V</text>
<path d="M11.2,604.25 L19.2,596.2 H103.9 L111.9,604.25 L103.9,612.3 H19.2 Z" fill="#fff" stroke="#333" stroke-width="1"/>
<text x="97.6" y="607.55" font-size="10" font-family="Liberation Mono" fill="#2a2a2a" text-anchor="end" textLength="26.5" lengthAdjust="spacingAndGlyphs">+345V</text>
<path d="M11.2,620.3 L19.2,612.3 H103.9 L111.9,620.3 L103.9,628.3 H19.2 Z" fill="#fff" stroke="#333" stroke-width="1"/>
<text x="97.6" y="623.5999999999999" font-size="10" font-family="Liberation Mono" fill="#2a2a2a" text-anchor="end" textLength="37.1" lengthAdjust="spacingAndGlyphs">HOT+17V</text>
<path d="M11.2,636.45 L19.2,628.3 H103.9 L111.9,636.45 L103.9,644.6 H19.2 Z" fill="#fff" stroke="#333" stroke-width="1"/>
<text x="97.6" y="639.75" font-size="10" font-family="Liberation Mono" fill="#2a2a2a" text-anchor="end" textLength="68.9" lengthAdjust="spacingAndGlyphs">POWER-CONTROL</text>
<path d="M111.9,540.8 L154.1,540.8 L154.1,836" stroke="#333" stroke-width="1" fill="none" />
<path d="M111.9,604.2 L669.4,604.2" stroke="#333" stroke-width="1" fill="none" />
<circle cx="154.1" cy="604.2" r="1.9" fill="#222"/>
<circle cx="196.2" cy="604.2" r="1.9" fill="#222"/>
<circle cx="462" cy="604.2" r="1.9" fill="#222"/>
<circle cx="669.4" cy="604.2" r="1.9" fill="#222"/>
<path d="M111.9,620.3 L451.1,620.3 L451.1,836" stroke="#333" stroke-width="1" fill="none" />
<path d="M111.9,636.3 L430.5,636.3 L430.5,836" stroke="#333" stroke-width="1" fill="none" />
<path d="M196.2,604.2 L196.2,836" stroke="#333" stroke-width="1" fill="none" />
<path d="M154.1,652.15 L156.9,653.1 L151.29999999999998,655.0 L156.9,656.9 L151.29999999999998,658.8 L156.9,660.6999999999999 L154.1,661.65" stroke="#333" stroke-width="1" fill="none" />
<text x="159.4" y="657.6999999999999" font-size="10" font-family="Liberation Mono" fill="#2a2a2a" text-anchor="start" textLength="27.2" lengthAdjust="spacingAndGlyphs">R14O1</text>
<text x="159.4" y="665.4999999999999" font-size="10" font-family="Liberation Mono" fill="#2a2a2a" text-anchor="start" textLength="21.8" lengthAdjust="spacingAndGlyphs">825K</text>
<path d="M154.1,676.25 L156.9,677.2 L151.29999999999998,679.1 L156.9,681.0 L151.29999999999998,682.9 L156.9,684.8 L154.1,685.75" stroke="#333" stroke-width="1" fill="none" />
<text x="159.4" y="681.8" font-size="10" font-family="Liberation Mono" fill="#2a2a2a" text-anchor="start" textLength="27.2" lengthAdjust="spacingAndGlyphs">R14O2</text>
<text x="159.4" y="689.5999999999999" font-size="10" font-family="Liberation Mono" fill="#2a2a2a" text-anchor="start" textLength="21.8" lengthAdjust="spacingAndGlyphs">825K</text>
<path d="M154.1,699.65 L156.9,700.6 L151.29999999999998,702.5 L156.9,704.4 L151.29999999999998,706.3 L156.9,708.1999999999999 L154.1,709.15" stroke="#333" stroke-width="1" fill="none" />
<text x="159.4" y="705.1999999999999" font-size="10" font-family="Liberation Mono" fill="#2a2a2a" text-anchor="start" textLength="27.2" lengthAdjust="spacingAndGlyphs">R14O3</text>
<text x="159.4" y="712.9999999999999" font-size="10" font-family="Liberation Mono" fill="#2a2a2a" text-anchor="start" textLength="21.8" lengthAdjust="spacingAndGlyphs">619K</text>
<path d="M154.1,724.25 L156.9,725.2 L151.29999999999998,727.1 L156.9,729.0 L151.29999999999998,730.9 L156.9,732.8 L154.1,733.75" stroke="#333" stroke-width="1" fill="none" />
<text x="159.4" y="729.8" font-size="10" font-family="Liberation Mono" fill="#2a2a2a" text-anchor="start" textLength="27.2" lengthAdjust="spacingAndGlyphs">R14O4</text>
<text x="159.4" y="737.5999999999999" font-size="10" font-family="Liberation Mono" fill="#2a2a2a" text-anchor="start" textLength="21.8" lengthAdjust="spacingAndGlyphs">619K</text>
<path d="M196.2,652.15 L199.0,653.1 L193.39999999999998,655.0 L199.0,656.9 L193.39999999999998,658.8 L199.0,660.6999999999999 L196.2,661.65" stroke="#333" stroke-width="1" fill="none" />
<text x="201.5" y="657.6999999999999" font-size="10" font-family="Liberation Mono" fill="#2a2a2a" text-anchor="start" textLength="27.2" lengthAdjust="spacingAndGlyphs">R143O</text>
<text x="201.5" y="665.4999999999999" font-size="10" font-family="Liberation Mono" fill="#2a2a2a" text-anchor="start" textLength="21.8" lengthAdjust="spacingAndGlyphs">825K</text>
<path d="M196.2,676.25 L199.0,677.2 L193.39999999999998,679.1 L199.0,681.0 L193.39999999999998,682.9 L199.0,684.8 L196.2,685.75" stroke="#333" stroke-width="1" fill="none" />
<text x="201.5" y="681.8" font-size="10" font-family="Liberation Mono" fill="#2a2a2a" text-anchor="start" textLength="27.2" lengthAdjust="spacingAndGlyphs">R1431</text>
<text x="201.5" y="689.5999999999999" font-size="10" font-family="Liberation Mono" fill="#2a2a2a" text-anchor="start" textLength="21.8" lengthAdjust="spacingAndGlyphs">825K</text>
<path d="M196.2,699.65 L199.0,700.6 L193.39999999999998,702.5 L199.0,704.4 L193.39999999999998,706.3 L199.0,708.1999999999999 L196.2,709.15" stroke="#333" stroke-width="1" fill="none" />
<text x="201.5" y="705.1999999999999" font-size="10" font-family="Liberation Mono" fill="#2a2a2a" text-anchor="start" textLength="27.2" lengthAdjust="spacingAndGlyphs">R1432</text>
<text x="201.5" y="712.9999999999999" font-size="10" font-family="Liberation Mono" fill="#2a2a2a" text-anchor="start" textLength="21.8" lengthAdjust="spacingAndGlyphs">619K</text>
<path d="M196.2,724.25 L199.0,725.2 L193.39999999999998,727.1 L199.0,729.0 L193.39999999999998,730.9 L199.0,732.8 L196.2,733.75" stroke="#333" stroke-width="1" fill="none" />
<text x="201.5" y="729.8" font-size="10" font-family="Liberation Mono" fill="#2a2a2a" text-anchor="start" textLength="27.2" lengthAdjust="spacingAndGlyphs">R1433</text>
<text x="201.5" y="737.5999999999999" font-size="10" font-family="Liberation Mono" fill="#2a2a2a" text-anchor="start" textLength="21.8" lengthAdjust="spacingAndGlyphs">619K</text>
<path d="M249.9,652.15 L252.70000000000002,653.1 L247.1,655.0 L252.70000000000002,656.9 L247.1,658.8 L252.70000000000002,660.6999999999999 L249.9,661.65" stroke="#333" stroke-width="1" fill="none" />
<text x="255.20000000000002" y="657.6999999999999" font-size="10" font-family="Liberation Mono" fill="#2a2a2a" text-anchor="start" textLength="27.2" lengthAdjust="spacingAndGlyphs">R1425</text>
<text x="255.20000000000002" y="665.4999999999999" font-size="10" font-family="Liberation Mono" fill="#2a2a2a" text-anchor="start" textLength="21.8" lengthAdjust="spacingAndGlyphs">825K</text>
<path d="M249.9,676.25 L252.70000000000002,677.2 L247.1,679.1 L252.70000000000002,681.0 L247.1,682.9 L252.70000000000002,684.8 L249.9,685.75" stroke="#333" stroke-width="1" fill="none" />
<text x="255.20000000000002" y="681.8" font-size="10" font-family="Liberation Mono" fill="#2a2a2a" text-anchor="start" textLength="27.2" lengthAdjust="spacingAndGlyphs">R1426</text>
<text x="255.20000000000002" y="689.5999999999999" font-size="10" font-family="Liberation Mono" fill="#2a2a2a" text-anchor="start" textLength="21.8" lengthAdjust="spacingAndGlyphs">825K</text>
<path d="M249.9,699.65 L252.70000000000002,700.6 L247.1,702.5 L252.70000000000002,704.4 L247.1,706.3 L252.70000000000002,708.1999999999999 L249.9,709.15" stroke="#333" stroke-width="1" fill="none" />
<text x="255.20000000000002" y="705.1999999999999" font-size="10" font-family="Liberation Mono" fill="#2a2a2a" text-anchor="start" textLength="27.2" lengthAdjust="spacingAndGlyphs">R1427</text>
<text x="255.20000000000002" y="712.9999999999999" font-size="10" font-family="Liberation Mono" fill="#2a2a2a" text-anchor="start" textLength="21.8" lengthAdjust="spacingAndGlyphs">619K</text>
<path d="M249.9,724.25 L252.70000000000002,725.2 L247.1,727.1 L252.70000000000002,729.0 L247.1,730.9 L252.70000000000002,732.8 L249.9,733.75" stroke="#333" stroke-width="1" fill="none" />
<text x="255.20000000000002" y="729.8" font-size="10" font-family="Liberation Mono" fill="#2a2a2a" text-anchor="start" textLength="27.2" lengthAdjust="spacingAndGlyphs">R1428</text>
<text x="255.20000000000002" y="737.5999999999999" font-size="10" font-family="Liberation Mono" fill="#2a2a2a" text-anchor="start" textLength="21.8" lengthAdjust="spacingAndGlyphs">619K</text>
<path d="M69.1,752.5 L154.1,752.5" stroke="#333" stroke-width="1" fill="none" />
<circle cx="154.1" cy="752.5" r="1.9" fill="#222"/>
<circle cx="112" cy="752.5" r="1.9" fill="#222"/>
<path d="M69.1,752.5 L69.1,788.5" stroke="#333" stroke-width="1" fill="none" />
<rect x="68.1" y="767.3" width="2" height="3.2" fill="#fff"/>
<path d="M65.1,766.6999999999999 L73.1,766.6999999999999" stroke="#333" stroke-width="1.2" fill="none" />
<path d="M65.1,771.1 L73.1,771.1" stroke="#333" stroke-width="1.2" fill="none" />
<path d="M64.6,788.5 L73.6,788.5" stroke="#666" stroke-width="1" fill="none" />
<path d="M65.8,789.3 L72.39999999999999,789.3 L69.1,793.0 Z" fill="#9a9a9a" stroke="#888" stroke-width="0.6"/>
<text x="74.5" y="768.9" font-size="10" font-family="Liberation Mono" fill="#2a2a2a" text-anchor="start" textLength="27.2" lengthAdjust="spacingAndGlyphs">C14O7</text>
<text x="74.5" y="776.6" font-size="10" font-family="Liberation Mono" fill="#2a2a2a" text-anchor="start" textLength="27.2" lengthAdjust="spacingAndGlyphs">12OOP</text>
<path d="M112,752.5 L112,812" stroke="#333" stroke-width="1" fill="none" />
<path d="M112,764.25 L114.8,765.2 L109.2,767.1 L114.8,769.0 L109.2,770.9 L114.8,772.8 L112,773.75" stroke="#333" stroke-width="1" fill="none" />
<path d="M112,788.25 L114.8,789.2 L109.2,791.1 L114.8,793.0 L109.2,794.9 L114.8,796.8 L112,797.75" stroke="#333" stroke-width="1" fill="none" />
<path d="M107.5,812 L116.5,812" stroke="#666" stroke-width="1" fill="none" />
<path d="M108.7,812.8 L115.3,812.8 L112,816.5 Z" fill="#9a9a9a" stroke="#888" stroke-width="0.6"/>
<text x="117.2" y="768.9" font-size="10" font-family="Liberation Mono" fill="#2a2a2a" text-anchor="start" textLength="27.2" lengthAdjust="spacingAndGlyphs">R14O5</text>
<text x="117.2" y="776.6" font-size="10" font-family="Liberation Mono" fill="#2a2a2a" text-anchor="start" textLength="27.2" lengthAdjust="spacingAndGlyphs">51.1K</text>
<text x="117.2" y="793.5" font-size="10" font-family="Liberation Mono" fill="#2a2a2a" text-anchor="start" textLength="27.2" lengthAdjust="spacingAndGlyphs">R1414</text>
<text x="117.2" y="801.2" font-size="10" font-family="Liberation Mono" fill="#2a2a2a" text-anchor="start" textLength="5.4" lengthAdjust="spacingAndGlyphs">O</text>
<path d="M217.4,836 L217.4,763.3 L392.7,763.3 L392.7,836" stroke="#333" stroke-width="1" fill="none" />
<path d="M430.5,761.6 L433.3,762.6 L427.7,764.6 L433.3,766.6 L427.7,768.6 L433.3,770.6 L430.5,771.6" stroke="#333" stroke-width="1" fill="none" />
<text x="398.4" y="766.0" font-size="10" font-family="Liberation Mono" fill="#2a2a2a" text-anchor="start" textLength="27.2" lengthAdjust="spacingAndGlyphs">R1439</text>
<text x="398.4" y="773.6" font-size="10" font-family="Liberation Mono" fill="#2a2a2a" text-anchor="start" textLength="21.8" lengthAdjust="spacingAndGlyphs">2.2K</text>
<path d="M274.7,767.2 L281.4,780.0 L268.0,780.0 Z" fill="#111"/>
<rect x="273.7" y="771.4" width="2" height="4.6" fill="#fff"/>
<rect x="273.7" y="776.9" width="2" height="1.6" fill="#fff"/>
<text x="265" y="789.7" font-size="11.4" font-family="Liberation Mono" fill="#111" text-anchor="start" font-weight="bold" textLength="32.7" lengthAdjust="spacingAndGlyphs">IC14O1</text>
<text x="265.0" y="800.5" font-size="10" font-family="Liberation Mono" fill="#2a2a2a" text-anchor="start" textLength="54.4" lengthAdjust="spacingAndGlyphs">HPAOO651DR</text>
<text x="265.0" y="811.7" font-size="10" font-family="Liberation Mono" fill="#2a2a2a" text-anchor="start" textLength="103.4" lengthAdjust="spacingAndGlyphs">(SWITCHING CONTROL)</text>
<path d="M266,836 V816.6 H297.7 A10.5,10.5 0 0 0 318.7,816.6 H351.2 V836" fill="none" stroke="#111" stroke-width="2.4"/>
<text x="232.3" y="837.5" font-size="10" font-family="Liberation Mono" fill="#2a2a2a" text-anchor="start" textLength="15.9" lengthAdjust="spacingAndGlyphs">1.O</text>
<text x="370.2" y="837.5" font-size="10" font-family="Liberation Mono" fill="#2a2a2a" text-anchor="start" textLength="15.9" lengthAdjust="spacingAndGlyphs">1.O</text>
<circle cx="258.6" cy="837.5" r="7.2" fill="#fff" stroke="#333" stroke-width="1"/>
<circle cx="358.6" cy="837.5" r="7.2" fill="#fff" stroke="#333" stroke-width="1"/>
<path d="M462,562 L462,836" stroke="#333" stroke-width="1" fill="none" />
<circle cx="462" cy="562" r="1.9" fill="#222"/>
<circle cx="669.4" cy="562" r="1.9" fill="#222"/>
<rect x="461" y="579.8" width="2" height="6.4" fill="#fff"/>
<path d="M462,586.2 L465.3,579.8 L458.7,579.8 Z" stroke="#333" stroke-width="1" fill="none" />
<path d="M457.9,586.2 L466.1,586.2" stroke="#333" stroke-width="1" fill="none" />
<text x="467.0" y="583.1" font-size="10" font-family="Liberation Mono" fill="#2a2a2a" text-anchor="start" textLength="27.2" lengthAdjust="spacingAndGlyphs">D16O2</text>
<text x="467.0" y="591.3000000000001" font-size="10" font-family="Liberation Mono" fill="#2a2a2a" text-anchor="start" textLength="21.8" lengthAdjust="spacingAndGlyphs">OPEN</text>
<path d="M669.4,562 L669.4,836" stroke="#333" stroke-width="1" fill="none" />
<rect x="625.8000000000001" y="603.2" width="2.4000000000000004" height="2" fill="#fff"/>
<path d="M625.2,599.95 L625.2,608.45" stroke="#333" stroke-width="1.2" fill="none" />
<path d="M628.8,599.95 L628.8,608.45" stroke="#333" stroke-width="1.2" fill="none" />
<text x="613.1" y="617.7" font-size="10" font-family="Liberation Mono" fill="#2a2a2a" text-anchor="start" textLength="27.2" lengthAdjust="spacingAndGlyphs">C1618</text>
<text x="613.1" y="626.4000000000001" font-size="10" font-family="Liberation Mono" fill="#2a2a2a" text-anchor="start" textLength="27.2" lengthAdjust="spacingAndGlyphs">15OOP</text>
<text x="613.1" y="635.1" font-size="10" font-family="Liberation Mono" fill="#2a2a2a" text-anchor="start" textLength="21.8" lengthAdjust="spacingAndGlyphs">/1KV</text>
<path d="M575.2,654.6 L688,654.6" stroke="#333" stroke-width="1" fill="none" />
<circle cx="589.4" cy="654.6" r="1.9" fill="#222"/>
<circle cx="620.7" cy="654.6" r="1.9" fill="#222"/>
<path d="M575.2,654.6 L575.2,686.5" stroke="#333" stroke-width="1" fill="none" />
<rect x="574.2" y="669.35" width="2" height="3.3" fill="#fff"/>
<path d="M571.2,668.75 L579.2,668.75" stroke="#333" stroke-width="1.2" fill="none" />
<path d="M571.2,673.25 L579.2,673.25" stroke="#333" stroke-width="1.2" fill="none" />
<path d="M570.7,686.5 L579.7,686.5" stroke="#666" stroke-width="1" fill="none" />
<path d="M571.9000000000001,687.3 L578.5,687.3 L575.2,691.0 Z" fill="#9a9a9a" stroke="#888" stroke-width="0.6"/>
<text x="543.8" y="668.9" font-size="10" font-family="Liberation Mono" fill="#2a2a2a" text-anchor="start" textLength="27.2" lengthAdjust="spacingAndGlyphs">C1613</text>
<text x="543.8" y="676.1" font-size="10" font-family="Liberation Mono" fill="#2a2a2a" text-anchor="start" textLength="21.8" lengthAdjust="spacingAndGlyphs">OPEN</text>
<path d="M589.4,654.6 L589.4,726" stroke="#333" stroke-width="1" fill="none" />
<circle cx="586.7" cy="737.2" r="11" fill="none" stroke="#222" stroke-width="1.6"/>
<path d="M583,731 L583,743" stroke="#333" stroke-width="1.5" fill="none" />
<path d="M586,730 L586,744" stroke="#333" stroke-width="1.2" fill="none" />
<path d="M586,733 L592,733 L592,741 L586,741" stroke="#333" stroke-width="1" fill="none" />
<path d="M590,736 L594,736 L592,739 Z" fill="#222"/>
<path d="M589.4,726 L589.4,731" stroke="#333" stroke-width="1" fill="none" />
<path d="M589.4,744 L589.4,767" stroke="#333" stroke-width="1" fill="none" />
<path d="M584.9,767.5 L593.9,767.5" stroke="#666" stroke-width="1" fill="none" />
<path d="M586.1,768.3 L592.6999999999999,768.3 L589.4,772.0 Z" fill="#9a9a9a" stroke="#888" stroke-width="0.6"/>
<text x="581" y="723.3" font-size="10" font-family="Liberation Mono" fill="#2a2a2a" text-anchor="start" textLength="5.4" lengthAdjust="spacingAndGlyphs">D</text>
<text x="567" y="738.2" font-size="10" font-family="Liberation Mono" fill="#2a2a2a" text-anchor="start" textLength="5.4" lengthAdjust="spacingAndGlyphs">G</text>
<text x="581" y="757.3" font-size="10" font-family="Liberation Mono" fill="#2a2a2a" text-anchor="start" textLength="5.4" lengthAdjust="spacingAndGlyphs">S</text>
<text x="591.7" y="760.6" font-size="10" font-family="Liberation Mono" fill="#2a2a2a" text-anchor="start" textLength="5.4" lengthAdjust="spacingAndGlyphs">O</text>
<text x="554.7" y="750.7" font-size="10" font-family="Liberation Mono" fill="#2a2a2a" text-anchor="start" textLength="16.2" lengthAdjust="spacingAndGlyphs">8.8</text>
<text x="592.3" y="715" font-size="10" font-family="Liberation Mono" fill="#2a2a2a" text-anchor="start" textLength="27.0" lengthAdjust="spacingAndGlyphs">1OO.6</text>
<path d="M520.7,685.6 L527.4000000000001,698.4 L514.0,698.4 Z" fill="#111"/>
<rect x="519.7" y="689.8" width="2" height="4.6" fill="#fff"/>
<rect x="519.7" y="695.3" width="2" height="1.6" fill="#fff"/>
<text x="515.1" y="706.8" font-size="10" font-family="Liberation Mono" fill="#2a2a2a" text-anchor="start" textLength="27.2" lengthAdjust="spacingAndGlyphs">Q16O2</text>
<text x="515.1" y="715.0" font-size="10" font-family="Liberation Mono" fill="#2a2a2a" text-anchor="start" textLength="38.1" lengthAdjust="spacingAndGlyphs">2SK3561</text>
<text x="510.8" y="725.6" font-size="10" font-family="Liberation Mono" fill="#2a2a2a" text-anchor="start" textLength="59.4" lengthAdjust="spacingAndGlyphs">(SWITCHING)</text>
<path d="M620.7,654.6 L620.7,836" stroke="#333" stroke-width="1" fill="none" />
<path d="M478.5,836 L478.5,742.1 L575,742.1" stroke="#333" stroke-width="1" fill="none" />
<circle cx="515.1" cy="742.1" r="1.9" fill="#222"/>
<path d="M515.1,742.1 L515.1,802" stroke="#333" stroke-width="1" fill="none" />
<rect x="514.1" y="781.0999999999999" width="2" height="6.4" fill="#fff"/>
<path d="M515.1,781.0999999999999 L518.4,787.5 L511.8,787.5 Z" stroke="#333" stroke-width="1" fill="none" />
<path d="M510.8,782.5999999999999 L511.8,781.0999999999999 L518.4,781.0999999999999 L519.4,779.5999999999999" stroke="#333" stroke-width="1" fill="none" />
<path d="M510.6,802.5 L519.6,802.5" stroke="#666" stroke-width="1" fill="none" />
<path d="M511.8,803.3 L518.4,803.3 L515.1,807.0 Z" fill="#9a9a9a" stroke="#888" stroke-width="0.6"/>
<path d="M529.6,760.8000000000001 L536.3000000000001,773.6 L522.9,773.6 Z" fill="#111"/>
<rect x="528.6" y="765.0" width="2" height="4.6" fill="#fff"/>
<rect x="528.6" y="770.5" width="2" height="1.6" fill="#fff"/>
<text x="520.7" y="782.7" font-size="10" font-family="Liberation Mono" fill="#2a2a2a" text-anchor="start" textLength="27.2" lengthAdjust="spacingAndGlyphs">D16O5</text>
<text x="520.7" y="791.0" font-size="10" font-family="Liberation Mono" fill="#2a2a2a" text-anchor="start" textLength="49.0" lengthAdjust="spacingAndGlyphs">27BSB-T26</text>
<path d="M702,587.5 L708.7,600.3 L695.3,600.3 Z" fill="#111"/>
<rect x="701" y="591.6999999999999" width="2" height="4.6" fill="#fff"/>
<rect x="701" y="597.1999999999999" width="2" height="1.6" fill="#fff"/>
<text x="695.7" y="611.2" font-size="10" font-family="Liberation Mono" fill="#2a2a2a" text-anchor="start" textLength="27.2" lengthAdjust="spacingAndGlyphs">L16O4</text>
<text x="695.7" y="618.2" font-size="10" font-family="Liberation Mono" fill="#2a2a2a" text-anchor="start" textLength="65.3" lengthAdjust="spacingAndGlyphs">LLEEOZOKTOO1</text>
<path d="M695.7,636.2 L695.7,622.5 L740.2,622.5 L740.2,636.2" stroke="#333" stroke-width="1" fill="none" />
<path d="M695.7,729.1 L695.7,742.4 L740.2,742.4 L740.2,729.1" stroke="#333" stroke-width="1" fill="none" />
<path d="M695.7,636.2 L695.7,729.1" stroke="#333" stroke-width="1" fill="none" />
<path d="M740.2,636.2 L740.2,729.1" stroke="#333" stroke-width="1" fill="none" />
<path d="M703.2,654.6 L711.6,654.6" stroke="#333" stroke-width="1" fill="none" />
<path d="M703.2,710 L711.6,710" stroke="#333" stroke-width="1" fill="none" />
<path d="M724.3,654.6 L732.7,654.6" stroke="#333" stroke-width="1" fill="none" />
<path d="M724.3,710 L732.7,710" stroke="#333" stroke-width="1" fill="none" />
<rect x="711.3" y="654.6" width="2.6" height="55.4" fill="#111"/>
<rect x="722" y="654.6" width="2.6" height="55.4" fill="#111"/>
<path d="M715.2,654.6 L715.2,710" stroke="#222" stroke-width="0.9" fill="none" />
<path d="M718,654.6 L718,710" stroke="#222" stroke-width="0.9" fill="none" />
<path d="M720.6,654.6 L720.6,710" stroke="#222" stroke-width="0.9" fill="none" />
<path d="M747.7,636.2 L764.1,636.2 L764.1,769" stroke="#333" stroke-width="1" fill="none" />
<path d="M759.6,769.5 L768.6,769.5" stroke="#666" stroke-width="1" fill="none" />
<path d="M760.8000000000001,770.3 L767.4,770.3 L764.1,774.0 Z" fill="#9a9a9a" stroke="#888" stroke-width="0.6"/>
<path d="M747.7,654.6 L764.1,654.6" stroke="#333" stroke-width="1" fill="none" />
<circle cx="764.1" cy="654.6" r="1.9" fill="#222"/>
<path d="M747.7,673.4 L764.1,673.4" stroke="#333" stroke-width="1" fill="none" />
<circle cx="764.1" cy="673.4" r="1.9" fill="#222"/>
<path d="M747.7,729.1 L764.1,729.1" stroke="#333" stroke-width="1" fill="none" />
<circle cx="764.1" cy="729.1" r="1.9" fill="#222"/>
<circle cx="764.1" cy="758.4" r="1.9" fill="#222"/>
<path d="M669.4,710 L688.2,710" stroke="#333" stroke-width="1" fill="none" />
<circle cx="669.4" cy="710" r="1.9" fill="#222"/>
<path d="M747.7,710 L780,710 L780,836" stroke="#333" stroke-width="1" fill="none" />
<path d="M780,806.8 L782.8,807.8 L777.2,809.8 L782.8,811.8 L777.2,813.8 L782.8,815.8 L780,816.8" stroke="#333" stroke-width="1" fill="none" />
<text x="748.8" y="810.9" font-size="10" font-family="Liberation Mono" fill="#2a2a2a" text-anchor="start" textLength="27.2" lengthAdjust="spacingAndGlyphs">R16O3</text>
<text x="748.8" y="818.8" font-size="10" font-family="Liberation Mono" fill="#2a2a2a" text-anchor="start" textLength="16.3" lengthAdjust="spacingAndGlyphs">22K</text>
<path d="M669.4,758.4 L764.1,758.4" stroke="#333" stroke-width="1" fill="none" />
<circle cx="669.4" cy="758.4" r="1.9" fill="#222"/>
<rect x="710.4000000000001" y="757.4" width="2.4000000000000004" height="2" fill="#fff"/>
<path d="M709.8000000000001,754.15 L709.8000000000001,762.65" stroke="#333" stroke-width="1.2" fill="none" />
<path d="M713.4,754.15 L713.4,762.65" stroke="#333" stroke-width="1.2" fill="none" />
<text x="698.2" y="771.1" font-size="10" font-family="Liberation Mono" fill="#2a2a2a" text-anchor="start" textLength="27.2" lengthAdjust="spacingAndGlyphs">C162O</text>
<text x="698.2" y="780.3000000000001" font-size="10" font-family="Liberation Mono" fill="#2a2a2a" text-anchor="start" textLength="27.2" lengthAdjust="spacingAndGlyphs">15OOP</text>
<text x="698.2" y="789.5" font-size="10" font-family="Liberation Mono" fill="#2a2a2a" text-anchor="start" textLength="21.8" lengthAdjust="spacingAndGlyphs">/2KV</text>
<circle cx="695.7" cy="636.2" r="7.8" fill="#fff" stroke="#333" stroke-width="1"/>
<text x="695.7" y="639.8000000000001" font-size="10.5" font-family="Liberation Sans" fill="#2a2a2a" text-anchor="middle" textLength="5.6" lengthAdjust="spacingAndGlyphs">6</text>
<circle cx="740.2" cy="636.2" r="7.8" fill="#fff" stroke="#333" stroke-width="1"/>
<text x="740.2" y="639.8000000000001" font-size="10.5" font-family="Liberation Sans" fill="#2a2a2a" text-anchor="middle" textLength="5.6" lengthAdjust="spacingAndGlyphs">7</text>
<circle cx="695.7" cy="654.6" r="7.8" fill="#fff" stroke="#333" stroke-width="1"/>
<text x="695.7" y="658.2" font-size="10.5" font-family="Liberation Sans" fill="#2a2a2a" text-anchor="middle" textLength="5.6" lengthAdjust="spacingAndGlyphs">5</text>
<circle cx="740.2" cy="654.6" r="7.8" fill="#fff" stroke="#333" stroke-width="1"/>
<text x="740.2" y="658.2" font-size="10.5" font-family="Liberation Sans" fill="#2a2a2a" text-anchor="middle" textLength="5.6" lengthAdjust="spacingAndGlyphs">8</text>
<circle cx="695.7" cy="673.4" r="7.8" fill="#fff" stroke="#333" stroke-width="1"/>
<text x="695.7" y="677.0" font-size="10.5" font-family="Liberation Sans" fill="#2a2a2a" text-anchor="middle" textLength="5.6" lengthAdjust="spacingAndGlyphs">4</text>
<circle cx="740.2" cy="673.4" r="7.8" fill="#fff" stroke="#333" stroke-width="1"/>
<text x="740.2" y="677.0" font-size="10.5" font-family="Liberation Sans" fill="#2a2a2a" text-anchor="middle" textLength="5.6" lengthAdjust="spacingAndGlyphs">9</text>
<circle cx="695.7" cy="691.9" r="7.8" fill="#fff" stroke="#333" stroke-width="1"/>
<text x="695.7" y="695.5" font-size="10.5" font-family="Liberation Sans" fill="#2a2a2a" text-anchor="middle" textLength="5.6" lengthAdjust="spacingAndGlyphs">3</text>
<circle cx="740.2" cy="691.9" r="7.8" fill="#fff" stroke="#333" stroke-width="1"/>
<text x="740.2" y="695.5" font-size="10.5" font-family="Liberation Sans" fill="#2a2a2a" text-anchor="middle" textLength="11.2" lengthAdjust="spacingAndGlyphs">10</text>
<circle cx="695.7" cy="710" r="7.8" fill="#fff" stroke="#333" stroke-width="1"/>
<text x="695.7" y="713.6" font-size="10.5" font-family="Liberation Sans" fill="#2a2a2a" text-anchor="middle" textLength="5.6" lengthAdjust="spacingAndGlyphs">2</text>
<circle cx="740.2" cy="710" r="7.8" fill="#fff" stroke="#333" stroke-width="1"/>
<text x="740.2" y="713.6" font-size="10.5" font-family="Liberation Sans" fill="#2a2a2a" text-anchor="middle" textLength="11.2" lengthAdjust="spacingAndGlyphs">11</text>
<circle cx="695.7" cy="729.1" r="7.8" fill="#fff" stroke="#333" stroke-width="1"/>
<text x="695.7" y="732.7" font-size="10.5" font-family="Liberation Sans" fill="#2a2a2a" text-anchor="middle" textLength="5.6" lengthAdjust="spacingAndGlyphs">1</text>
<circle cx="740.2" cy="729.1" r="7.8" fill="#fff" stroke="#333" stroke-width="1"/>
<text x="740.2" y="732.7" font-size="10.5" font-family="Liberation Sans" fill="#2a2a2a" text-anchor="middle" textLength="11.2" lengthAdjust="spacingAndGlyphs">12</text>
</svg>
</body></html>
